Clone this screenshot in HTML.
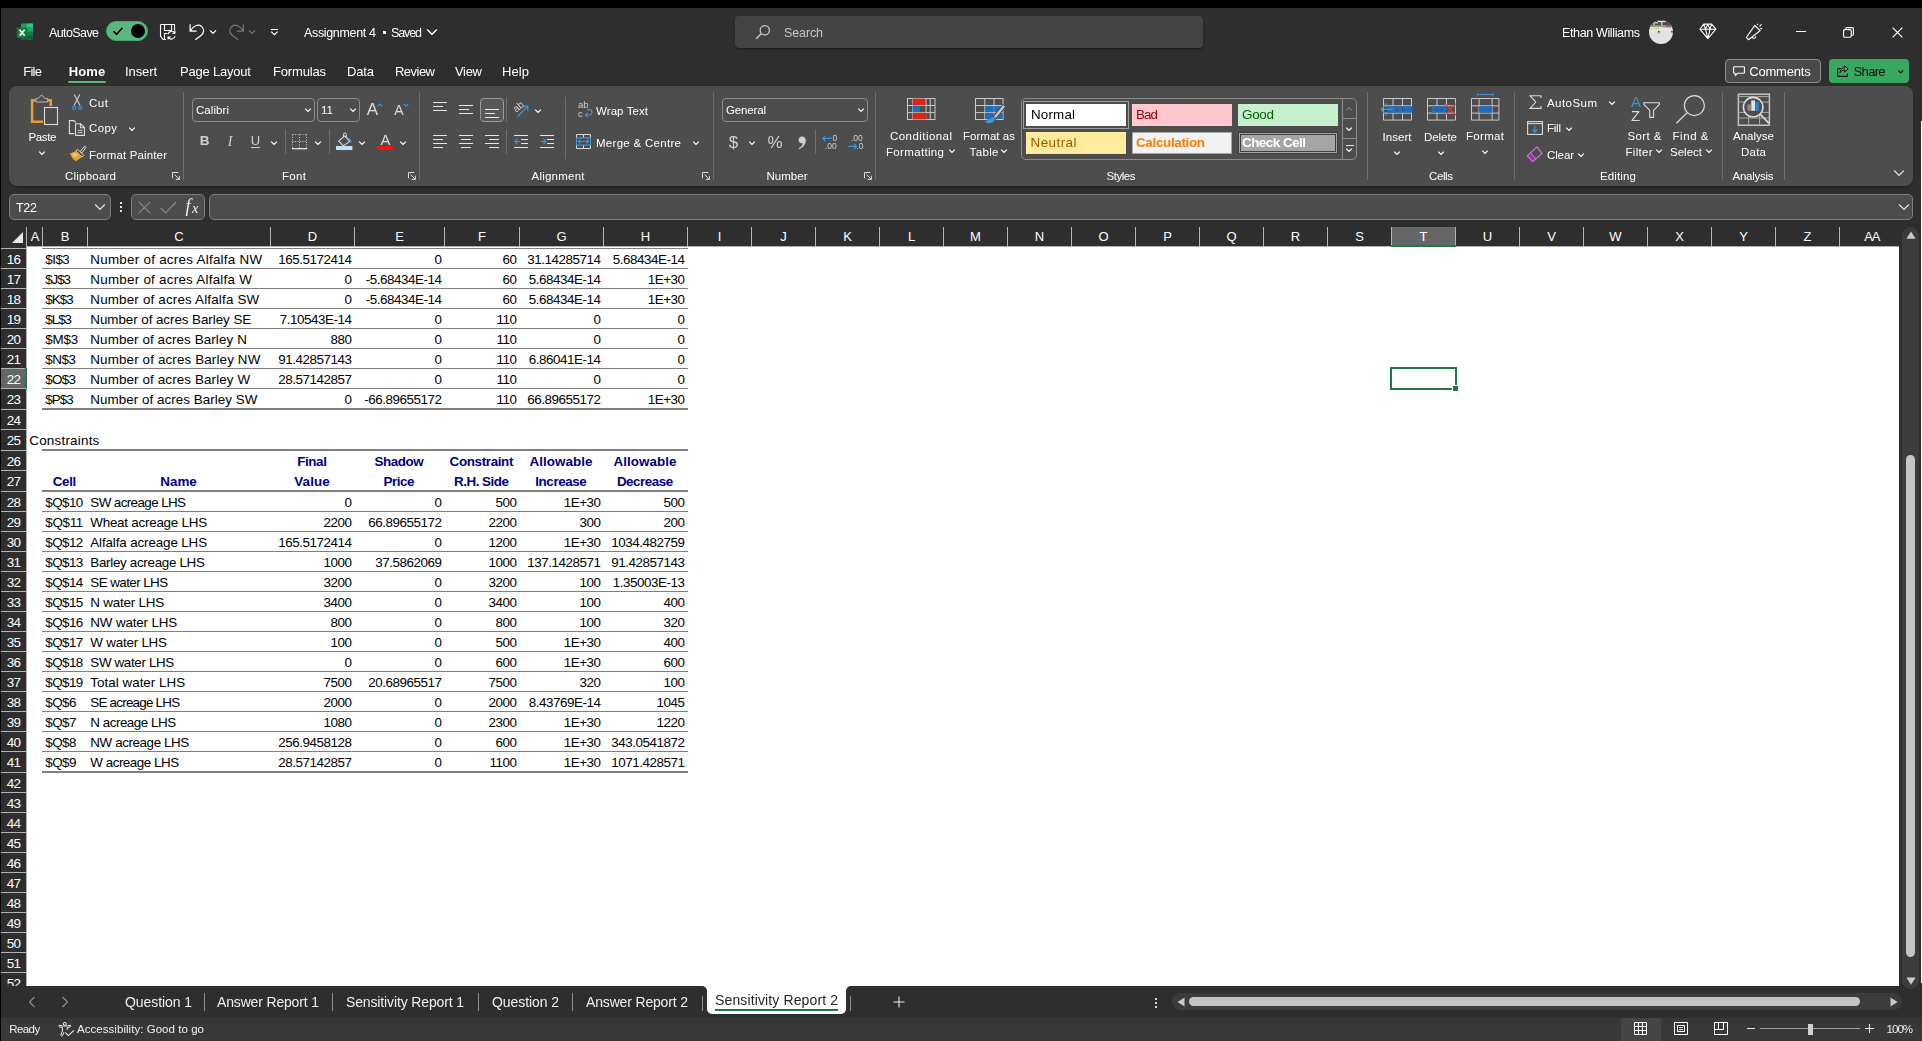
<!DOCTYPE html>
<html><head><meta charset="utf-8"><title>Excel</title>
<style>
html,body{margin:0;padding:0;}
body{width:1922px;height:1041px;overflow:hidden;background:#000;font-family:"Liberation Sans", sans-serif;position:relative;}
#r{position:absolute;left:0;top:0;width:1922px;height:1041px;overflow:hidden;background:#000;}
#r div,#r svg{position:absolute;box-sizing:border-box;}
#r svg{overflow:visible;}
.t{white-space:nowrap;font-kerning:normal;}
</style></head>
<body><div id="r">
<div style="left:1px;top:8px;width:1921px;height:1033px;background:#2e2e2e;"></div>
<svg style="left:16px;top:23px;" width="18" height="18" viewBox="0 0 18 18">
<rect x="5" y="0.6" width="12" height="16" rx="1.2" fill="#21a366"/>
<rect x="11" y="0.6" width="6" height="4" fill="#33c481"/>
<rect x="5" y="4.6" width="6" height="4" fill="#107c41"/>
<rect x="11" y="4.6" width="6" height="4" fill="#21a366"/>
<rect x="5" y="8.6" width="6" height="4" fill="#185c37"/>
<rect x="11" y="8.6" width="6" height="4" fill="#107c41"/>
<path d="M5 12.6 H17 V15.4 Q17 16.6 15.8 16.6 H6.2 Q5 16.6 5 15.4 Z" fill="#185c37"/>
<rect x="0.8" y="4.4" width="10.6" height="10.6" rx="1.2" fill="#107c41"/>
<path d="M3.6 6.8 L8.6 12.6 M8.6 6.8 L3.6 12.6" stroke="#fff" stroke-width="1.7" fill="none"/>
</svg>
<div style="left:106px;top:21px;width:42px;height:20px;background:#5ab87e;border-radius:10px;border:1.5px solid #4aa56d;"></div>
<div style="left:131px;top:24px;width:14px;height:14px;background:#000;border-radius:7px;"></div>
<svg style="left:112px;top:26px;" width="12" height="10" viewBox="0 0 12 10"><path d="M1.5 5.2 L4.6 8.3 L10.5 1.8" stroke="#000" stroke-width="1.6" fill="none"/></svg>
<svg style="left:159px;top:22px;" width="18" height="19" viewBox="0 0 18 19">
<path d="M1.5 2.5 H15.5 V8.4 M1.5 2.5 V14.2 L4 17.5 H7" stroke="#fff" stroke-width="1.1" fill="none" stroke-linejoin="round"/>
<path d="M5.5 2.5 V8.5 H12.5 V2.5" stroke="#fff" stroke-width="1.1" fill="none"/>
<path d="M5.5 17.5 V11.5 H8.4" stroke="#fff" stroke-width="1.1" fill="none"/>
<path d="M9.1 12.2 A3.6 3.6 0 0 1 15.7 11 M16 8.8 V11.4 H13.4" stroke="#fff" stroke-width="1.1" fill="none"/>
<path d="M16 14.2 A3.6 3.6 0 0 1 9.4 15.4 M9.1 17.6 V15 H11.7" stroke="#fff" stroke-width="1.1" fill="none"/>
</svg>
<svg style="left:189px;top:23px;" width="18" height="18" viewBox="0 0 18 18"><path d="M1.1 1.2 V8.1 H7.6 M1.5 7.7 C4 3 9 0.6 12.6 3.4 C16 6.2 14.8 10 12 12.6 L6.2 16.8" stroke="#fff" stroke-width="1.25" fill="none"/></svg>
<svg style="left:209.4px;top:28.6px;" width="8" height="6" viewBox="0 0 8 6"><path d="M1 1.4 L4 4.4 L7 1.4" stroke="#fff" stroke-width="1.25" fill="none"/></svg>
<svg style="left:226.6px;top:23px;" width="18" height="18" viewBox="0 0 18 18"><path d="M16.3 1.2 V8.1 H9.8 M15.9 7.7 C13.4 3 8.4 0.6 4.8 3.4 C1.4 6.2 2.6 10 5.4 12.6 L11.2 16.8" stroke="#757575" stroke-width="1.25" fill="none"/></svg>
<svg style="left:248.3px;top:28.6px;" width="8" height="6" viewBox="0 0 8 6"><path d="M1 1.4 L4 4.4 L7 1.4" stroke="#757575" stroke-width="1.25" fill="none"/></svg>
<svg style="left:270px;top:28px;" width="9" height="8" viewBox="0 0 9 8"><path d="M0.8 1.5 H8" stroke="#fff" stroke-width="1"/><path d="M1.2 3.6 L4.4 6.6 L7.6 3.6" stroke="#fff" stroke-width="1.2" fill="none"/></svg>
<div style="left:383px;top:31px;width:3px;height:3px;background:#fff;"></div>
<svg style="left:426px;top:28px;" width="12" height="8" viewBox="0 0 12 8"><path d="M1.2 1.5 L6 6.3 L10.8 1.5" stroke="#fff" stroke-width="1.3" fill="none"/></svg>
<div style="left:735px;top:16px;width:468px;height:32px;background:#444444;border-radius:4px;box-shadow:0 1px 2px rgba(0,0,0,0.45);"></div>
<svg style="left:755px;top:24px;" width="16" height="16" viewBox="0 0 16 16"><circle cx="9.8" cy="6.2" r="4.6" stroke="#c8c8c8" stroke-width="1.3" fill="none"/><path d="M6.4 9.6 L1.2 14.8" stroke="#c8c8c8" stroke-width="1.4"/></svg>
<svg style="left:1649px;top:20px;" width="24" height="24" viewBox="0 0 24 24">
<defs><clipPath id="av"><circle cx="12" cy="12" r="12"/></clipPath></defs>
<g clip-path="url(#av)">
<rect x="0" y="0" width="24" height="24" fill="#e2e2e2"/>
<rect x="0" y="0" width="24" height="5.6" fill="#4c4c4c"/>
<path d="M5 2.8 H9 M9 1.6 H16.5 M12.8 1.6 V5.6 M5 2.8 V5" stroke="#f4f4f4" stroke-width="1" fill="none"/>
<rect x="0" y="5.6" width="24" height="1.2" fill="#8a8a8a"/>
<rect x="17" y="5.4" width="7" height="1.1" fill="#c03030"/>
<rect x="14" y="7" width="10" height="1" fill="#e4c800"/>
<rect x="1.5" y="8.6" width="1.4" height="1" fill="#e4c800"/><rect x="5" y="7.8" width="3" height="0.9" fill="#e4c800"/><rect x="9" y="7.4" width="1" height="1.2" fill="#58c070"/>
<rect x="9" y="11" width="1.6" height="1.6" fill="#a02020"/><rect x="8" y="12.8" width="3.4" height="0.6" fill="#c9a0a0"/>
<rect x="22" y="11" width="2" height="1.6" fill="#2a6a9a"/>
</g></svg>
<svg style="left:1699px;top:23px;" width="18" height="17" viewBox="0 0 18 17"><path d="M4.8 1.1 H12.6 L16.9 6.2 L8.85 15.6 L0.9 6.2 Z M0.9 6.2 H16.9 M4.8 1.1 L6.5 6.2 L8.7 1.1 L11.1 6.2 L12.6 1.1 M6.5 6.2 L8.85 15.6 L11.1 6.2" stroke="#fff" stroke-width="1.05" fill="none" stroke-linejoin="round"/></svg>
<svg style="left:1745px;top:22px;" width="19" height="19" viewBox="0 0 19 19"><path d="M9.7 3.5 L15.2 8.6 L3.5 17.7 L1.3 15.5 Z" stroke="#fff" stroke-width="1.2" fill="none" stroke-linejoin="round"/><path d="M7.2 15 C7.8 17 10.6 16.8 10.9 14.2" stroke="#fff" stroke-width="1.1" fill="none"/><path d="M12.2 2.9 L13 1.9 M14.4 4.3 L16.6 2.4 M15.3 6.4 L17.1 6.7" stroke="#fff" stroke-width="1.1"/></svg>
<div style="left:1796px;top:31px;width:10px;height:1px;background:#fff;"></div>
<svg style="left:1843px;top:27px;" width="11" height="11" viewBox="0 0 11 11"><rect x="0.6" y="2.6" width="7.6" height="7.6" rx="1.2" stroke="#fff" stroke-width="1.1" fill="none"/><path d="M2.8 2.6 V1.6 Q2.8 0.6 3.8 0.6 H9.2 Q10.4 0.6 10.4 1.8 V7.2 Q10.4 8.2 9.4 8.2 H8.2" stroke="#fff" stroke-width="1.1" fill="none"/></svg>
<svg style="left:1892px;top:27px;" width="11" height="11" viewBox="0 0 11 11"><path d="M0.6 0.6 L10.4 10.4 M10.4 0.6 L0.6 10.4" stroke="#fff" stroke-width="1.2"/></svg>
<div style="left:68px;top:81px;width:38px;height:2px;background:#5ab87e;border-radius:1px;"></div>
<div style="left:1725px;top:59px;width:96px;height:24px;background:#4a4a4a;border:1px solid #8e8e8e;border-radius:4px;"></div>
<svg style="left:1733px;top:65.5px;" width="12" height="11" viewBox="0 0 12 11"><path d="M1.4 0.8 H10.6 Q11.4 0.8 11.4 1.6 V6.4 Q11.4 7.2 10.6 7.2 H4.6 L2.2 9.6 V7.2 H1.4 Q0.6 7.2 0.6 6.4 V1.6 Q0.6 0.8 1.4 0.8 Z" stroke="#fff" stroke-width="1.1" fill="none" stroke-linejoin="round"/></svg>
<div style="left:1829px;top:59px;width:80px;height:24px;background:#38a75f;border-radius:4px;"></div>
<svg style="left:1836.5px;top:65px;" width="12" height="12" viewBox="0 0 12 12"><path d="M4.2 3.6 H1.6 Q0.6 3.6 0.6 4.6 V10.4 Q0.6 11.4 1.6 11.4 H9.4 Q10.4 11.4 10.4 10.4 V8.4" stroke="#111" stroke-width="1.1" fill="none"/><path d="M7.6 0.8 L11.2 3.9 L7.6 7 V5.1 C5.4 5.1 4 6 3 7.8 C3.2 4.8 4.8 3 7.6 2.7 Z" stroke="#111" stroke-width="1" fill="none" stroke-linejoin="round"/></svg>
<svg style="left:1897px;top:68.5px;" width="8" height="6" viewBox="0 0 8 6"><path d="M1.2 1.4 L3.7 3.9 L6.2 1.4" stroke="#111" stroke-width="1.15" fill="none"/></svg>
<div style="left:9px;top:194px;width:102px;height:26px;background:#4d4d4d;border:1px solid #7d7d7d;border-radius:5px;"></div>
<svg style="left:94px;top:203px;" width="12" height="8" viewBox="0 0 12 8"><path d="M1.2 1.5 L6 6.3 L10.8 1.5" stroke="#e6e6e6" stroke-width="1.2" fill="none"/></svg>
<div style="left:120px;top:202px;width:2px;height:2px;background:#e0e0e0;"></div>
<div style="left:120px;top:206px;width:2px;height:2px;background:#e0e0e0;"></div>
<div style="left:120px;top:210px;width:2px;height:2px;background:#e0e0e0;"></div>
<div style="left:131px;top:194px;width:74px;height:26px;background:#4d4d4d;border:1px solid #7d7d7d;border-radius:5px;"></div>
<svg style="left:138px;top:201px;" width="13" height="13" viewBox="0 0 13 13"><path d="M0.8 0.8 L12.2 12.2 M12.2 0.8 L0.8 12.2" stroke="#8c8c8c" stroke-width="1.1"/></svg>
<svg style="left:160px;top:201px;" width="17" height="13" viewBox="0 0 17 13"><path d="M0.8 7 L5.6 11.8 L16.2 1" stroke="#8c8c8c" stroke-width="1.1" fill="none"/></svg>
<div style="left:209px;top:194px;width:1704px;height:26px;background:#4d4d4d;border:1px solid #7d7d7d;border-radius:5px;"></div>
<svg style="left:1897.5px;top:202.5px;" width="12" height="8" viewBox="0 0 12 8"><path d="M1.2 1.5 L6 6.3 L10.8 1.5" stroke="#e6e6e6" stroke-width="1.2" fill="none"/></svg>
<div style="left:9px;top:86px;width:1904px;height:100px;background:#4d4d4d;border-radius:8px;box-shadow:0 1px 2px rgba(0,0,0,0.35);"></div>
<svg style="left:29px;top:93px;" width="31" height="33" viewBox="0 0 31 33">
<path d="M7.2 7.2 H3.1 V28.8 H14" stroke="#e8a030" stroke-width="2.5" fill="none"/>
<path d="M18.4 7.2 H21.8 V13" stroke="#e8a030" stroke-width="2.5" fill="none"/>
<path d="M6.9 9 V5.4 H9.6 Q12.6 -0.6 15.6 5.4 H18.6 V9 Z" stroke="#b8b8b8" stroke-width="1" fill="#4d4d4d"/>
<rect x="15.5" y="14.5" width="13" height="17" stroke="#dcdcdc" stroke-width="1.1" fill="#4d4d4d"/>
</svg>
<svg style="left:37.5px;top:149.5px;" width="8" height="6" viewBox="0 0 8 6"><path d="M1.2 1.6 L4 4.4 L6.8 1.6" stroke="#fff" stroke-width="1.2" fill="none"/></svg>
<svg style="left:71px;top:94px;" width="12" height="17" viewBox="0 0 12 17">
<path d="M3.2 0.4 L9 11.4 M8.8 0.4 L3 11.4" stroke="#cfcfcf" stroke-width="1.1" fill="none"/>
<circle cx="3" cy="13.8" r="1.6" stroke="#3a96dd" stroke-width="1.1" fill="none"/>
<circle cx="9.2" cy="13.8" r="1.6" stroke="#3a96dd" stroke-width="1.1" fill="none"/>
</svg>
<svg style="left:68px;top:119px;" width="18" height="18" viewBox="0 0 18 18">
<path d="M6.4 14.6 H1.4 V1.6 H6 L7.8 3.4" stroke="#dcdcdc" stroke-width="1.1" fill="none"/>
<path d="M7.6 4.8 H12.6 L16.4 8.6 V16.4 H7.6 Z M12.4 5 V8.8 H16.2" stroke="#dcdcdc" stroke-width="1.1" fill="none"/>
<path d="M9.8 11.4 H14.4 M9.8 13.6 H14.4" stroke="#dcdcdc" stroke-width="0.9"/>
</svg>
<svg style="left:128px;top:125.5px;" width="8" height="6" viewBox="0 0 8 6"><path d="M1.2 1.6 L4 4.4 L6.8 1.6" stroke="#fff" stroke-width="1.2" fill="none"/></svg>
<svg style="left:68px;top:145px;" width="19" height="18" viewBox="0 0 19 18">
<path d="M16.4 1.4 L12.2 6.6 L13.8 8 L17.8 2.8 Q18 1 16.4 1.4 Z" stroke="#dcdcdc" stroke-width="1" fill="none" stroke-linejoin="round"/>
<path d="M9.6 4.2 L15.8 10.4 L14 12.2 L7.8 6 Z" stroke="#dcdcdc" stroke-width="1" fill="none" stroke-linejoin="round"/>
<path d="M7.4 6.2 L1.4 8.8 C3.6 10 3.4 12.6 5.4 14.6 L8.2 16.2 L14 11.8 Z" fill="#e8a030"/>
<path d="M7.6 7.6 L4 9.2 C5 10.4 5.6 11.6 6 12.6 L10.6 10.4 Z" fill="#f3c46c"/>
</svg>
<svg style="left:172.2px;top:172px;" width="9" height="9" viewBox="0 0 9 9"><path d="M0.5 6.3 V0.5 H6.3 M2.6 2.6 L7.4 7.4 M7.4 3.8 V7.4 H3.8" stroke="#dcdcdc" stroke-width="1" fill="none"/></svg>
<div style="left:183px;top:92px;width:1px;height:88px;background:#6f6f6f;"></div>
<div style="left:192px;top:98px;width:123px;height:24px;background:#4d4d4d;border:1px solid #8a8a8a;border-radius:4px;"></div>
<svg style="left:304px;top:107px;" width="8" height="6" viewBox="0 0 8 6"><path d="M1.2 1.6 L4 4.4 L6.8 1.6" stroke="#fff" stroke-width="1.2" fill="none"/></svg>
<div style="left:317px;top:98px;width:43px;height:24px;background:#4d4d4d;border:1px solid #8a8a8a;border-radius:4px;"></div>
<svg style="left:349px;top:107px;" width="8" height="6" viewBox="0 0 8 6"><path d="M1.2 1.6 L4 4.4 L6.8 1.6" stroke="#fff" stroke-width="1.2" fill="none"/></svg>
<svg style="left:377px;top:102.5px;" width="6" height="4" viewBox="0 0 6 4"><path d="M0.6 3.4 L3 1 L5.4 3.4" stroke="#3a96dd" stroke-width="1.1" fill="none"/></svg>
<svg style="left:402.5px;top:102.5px;" width="6" height="4" viewBox="0 0 6 4"><path d="M0.6 0.8 L3 3.2 L5.4 0.8" stroke="#3a96dd" stroke-width="1.1" fill="none"/></svg>
<div style="left:251px;top:147px;width:9px;height:1px;background:#d0d0d0;"></div>
<svg style="left:270px;top:139.5px;" width="8" height="6" viewBox="0 0 8 6"><path d="M1.2 1.6 L4 4.4 L6.8 1.6" stroke="#fff" stroke-width="1.2" fill="none"/></svg>
<div style="left:285px;top:130px;width:1px;height:24px;background:#6f6f6f;"></div>
<svg style="left:292px;top:134px;" width="16" height="16" viewBox="0 0 16 16">
<path d="M0.5 0.5 H15 M0.5 0.5 V14 M14.5 0.5 V14 M7.5 0.5 V14 M0.5 7.5 H15" stroke="#c4c4c4" stroke-width="1" stroke-dasharray="1 1.5" fill="none"/>
<path d="M0 14.7 H15.2" stroke="#f0f0f0" stroke-width="1.2"/></svg>
<svg style="left:314px;top:139.5px;" width="8" height="6" viewBox="0 0 8 6"><path d="M1.2 1.6 L4 4.4 L6.8 1.6" stroke="#fff" stroke-width="1.2" fill="none"/></svg>
<div style="left:329px;top:130px;width:1px;height:24px;background:#6f6f6f;"></div>
<svg style="left:336px;top:132px;" width="17" height="19" viewBox="0 0 17 19">
<path d="M2.75 9.2 L8.6 3.9 L13.75 9.4 L8.2 13.4 Q7.4 13.9 6.6 13.2 Z" stroke="#dcdcdc" stroke-width="1.1" fill="none" stroke-linejoin="round"/>
<path d="M7.5 5.2 V2.4 Q7.5 1 8.9 1 Q10.3 1 10.3 2.4 V5.6" stroke="#dcdcdc" stroke-width="1" fill="none"/>
<path d="M12.4 6 Q15.4 8 14.6 10.8" stroke="#3a96dd" stroke-width="1.3" fill="none"/>
<rect x="0" y="14" width="16.4" height="4" fill="#c7e0f4"/></svg>
<svg style="left:358px;top:139.5px;" width="8" height="6" viewBox="0 0 8 6"><path d="M1.2 1.6 L4 4.4 L6.8 1.6" stroke="#fff" stroke-width="1.2" fill="none"/></svg>
<div style="left:377px;top:146px;width:16px;height:4px;background:#f01414;"></div>
<svg style="left:399px;top:139.5px;" width="8" height="6" viewBox="0 0 8 6"><path d="M1.2 1.6 L4 4.4 L6.8 1.6" stroke="#fff" stroke-width="1.2" fill="none"/></svg>
<svg style="left:408px;top:172px;" width="9" height="9" viewBox="0 0 9 9"><path d="M0.5 6.3 V0.5 H6.3 M2.6 2.6 L7.4 7.4 M7.4 3.8 V7.4 H3.8" stroke="#dcdcdc" stroke-width="1" fill="none"/></svg>
<div style="left:419px;top:92px;width:1px;height:88px;background:#6f6f6f;"></div>
<svg style="left:433px;top:102px;" width="14" height="12" viewBox="0 0 14 12"><rect x="0" y="0" width="14" height="1" fill="#e6e6e6"/><rect x="0" y="4" width="10" height="1" fill="#e6e6e6"/><rect x="0" y="8" width="14" height="1" fill="#e6e6e6"/></svg>
<svg style="left:459px;top:105px;" width="14" height="12" viewBox="0 0 14 12"><rect x="0" y="0" width="14" height="1" fill="#e6e6e6"/><rect x="0" y="4" width="10" height="1" fill="#e6e6e6"/><rect x="0" y="8" width="14" height="1" fill="#e6e6e6"/></svg>
<div style="left:480px;top:98px;width:24px;height:24px;background:#585858;border:1px solid #9a9a9a;border-radius:4px;"></div>
<svg style="left:485px;top:109px;" width="14" height="12" viewBox="0 0 14 12"><rect x="0" y="0" width="14" height="1" fill="#e6e6e6"/><rect x="0" y="4" width="10" height="1" fill="#e6e6e6"/><rect x="0" y="8" width="14" height="1" fill="#e6e6e6"/></svg>
<div style="left:506px;top:98px;width:1px;height:24px;background:#6f6f6f;"></div>
<svg style="left:516px;top:103.5px;" width="14" height="14" viewBox="0 0 14 14"><path d="M1.5 12.5 L11.5 2.5 M6.8 2.2 H11.8 V7.2" stroke="#3a96dd" stroke-width="1.2" fill="none"/></svg>
<svg style="left:533.5px;top:107.5px;" width="8" height="6" viewBox="0 0 8 6"><path d="M1.2 1.6 L4 4.4 L6.8 1.6" stroke="#fff" stroke-width="1.2" fill="none"/></svg>
<svg style="left:433px;top:135px;" width="14" height="16" viewBox="0 0 14 16"><rect x="0" y="0" width="14" height="1" fill="#e6e6e6"/><rect x="0" y="4" width="10" height="1" fill="#e6e6e6"/><rect x="0" y="8" width="14" height="1" fill="#e6e6e6"/><rect x="0" y="12" width="10" height="1" fill="#e6e6e6"/></svg>
<svg style="left:459px;top:135px;" width="14" height="16" viewBox="0 0 14 16"><rect x="0" y="0" width="14" height="1" fill="#e6e6e6"/><rect x="2" y="4" width="10" height="1" fill="#e6e6e6"/><rect x="0" y="8" width="14" height="1" fill="#e6e6e6"/><rect x="2" y="12" width="10" height="1" fill="#e6e6e6"/></svg>
<svg style="left:485px;top:135px;" width="14" height="16" viewBox="0 0 14 16"><rect x="0" y="0" width="14" height="1" fill="#e6e6e6"/><rect x="4" y="4" width="10" height="1" fill="#e6e6e6"/><rect x="0" y="8" width="14" height="1" fill="#e6e6e6"/><rect x="4" y="12" width="10" height="1" fill="#e6e6e6"/></svg>
<div style="left:506px;top:130px;width:1px;height:24px;background:#6f6f6f;"></div>
<svg style="left:514px;top:135px;" width="14" height="13" viewBox="0 0 14 13"><path d="M0 0.5 H14 M7 4.5 H14 M7 8.5 H14 M0 12.5 H14" stroke="#e6e6e6" stroke-width="1"/><path d="M6 6.5 H0.8 M3.2 4 L0.8 6.5 L3.2 9" stroke="#3a96dd" stroke-width="1.1" fill="none"/></svg>
<svg style="left:540px;top:135px;" width="14" height="13" viewBox="0 0 14 13"><path d="M0 0.5 H14 M7 4.5 H14 M7 8.5 H14 M0 12.5 H14" stroke="#e6e6e6" stroke-width="1"/><path d="M0.6 6.5 H5.8 M3.4 4 L5.8 6.5 L3.4 9" stroke="#3a96dd" stroke-width="1.1" fill="none"/></svg>
<div style="left:565px;top:97px;width:1px;height:62px;background:#6f6f6f;"></div>
<svg style="left:583px;top:108px;" width="10" height="10" viewBox="0 0 10 10"><path d="M4 1.6 H6.4 Q9 1.6 9 4.4 Q9 7 6.4 7 H2.5 M4.6 4.8 L2.4 7 L4.6 9.2" stroke="#3a96dd" stroke-width="1.1" fill="none"/></svg>
<svg style="left:576px;top:134px;" width="15" height="15" viewBox="0 0 15 15">
<path d="M0.5 0.5 H14.5 V14.5 H0.5 Z M7.5 0.5 V4 M7.5 11 V14.5" stroke="#dcdcdc" stroke-width="1" fill="none"/>
<path d="M0.5 3.9 H14.5 V11.1 H0.5 Z" stroke="#3a96dd" stroke-width="1.1" fill="none"/>
<path d="M2.4 7.5 H12.6 M4.4 5.5 L2.4 7.5 L4.4 9.5 M10.6 5.5 L12.6 7.5 L10.6 9.5" stroke="#3a96dd" stroke-width="1.1" fill="none"/></svg>
<svg style="left:692px;top:139.5px;" width="8" height="6" viewBox="0 0 8 6"><path d="M1.2 1.6 L4 4.4 L6.8 1.6" stroke="#fff" stroke-width="1.2" fill="none"/></svg>
<svg style="left:702px;top:172px;" width="9" height="9" viewBox="0 0 9 9"><path d="M0.5 6.3 V0.5 H6.3 M2.6 2.6 L7.4 7.4 M7.4 3.8 V7.4 H3.8" stroke="#dcdcdc" stroke-width="1" fill="none"/></svg>
<div style="left:713px;top:92px;width:1px;height:88px;background:#6f6f6f;"></div>
<div style="left:722px;top:98px;width:146px;height:24px;background:#4d4d4d;border:1px solid #8a8a8a;border-radius:4px;"></div>
<svg style="left:857px;top:107px;" width="8" height="6" viewBox="0 0 8 6"><path d="M1.2 1.6 L4 4.4 L6.8 1.6" stroke="#fff" stroke-width="1.2" fill="none"/></svg>
<svg style="left:748px;top:139.5px;" width="8" height="6" viewBox="0 0 8 6"><path d="M1.2 1.6 L4 4.4 L6.8 1.6" stroke="#fff" stroke-width="1.2" fill="none"/></svg>
<svg style="left:796.5px;top:135.7px;" width="10" height="14" viewBox="0 0 10 14"><path d="M5 0.5 C7.5 0.5 8.8 2.4 8.8 4.6 C8.8 8.4 6 11.6 2.2 13.2 L1.6 12.2 C4.2 10.8 5.6 9 5.8 7.2 C3.6 7.6 1.6 6.2 1.6 3.9 C1.6 1.9 3.1 0.5 5 0.5 Z" fill="#d0d0d0"/></svg>
<div style="left:815px;top:130px;width:1px;height:24px;background:#6f6f6f;"></div>
<svg style="left:822px;top:135px;" width="11" height="7" viewBox="0 0 11 7"><path d="M0.8 3.4 H9.8 M3.4 0.8 L0.8 3.4 L3.4 6" stroke="#3a96dd" stroke-width="1.1" fill="none"/></svg>
<svg style="left:848px;top:142.5px;" width="10" height="7" viewBox="0 0 10 7"><path d="M0.4 3.4 H8.6 M6 0.8 L8.6 3.4 L6 6" stroke="#3a96dd" stroke-width="1.1" fill="none"/></svg>
<svg style="left:864px;top:172px;" width="9" height="9" viewBox="0 0 9 9"><path d="M0.5 6.3 V0.5 H6.3 M2.6 2.6 L7.4 7.4 M7.4 3.8 V7.4 H3.8" stroke="#dcdcdc" stroke-width="1" fill="none"/></svg>
<div style="left:875px;top:92px;width:1px;height:88px;background:#6f6f6f;"></div>
<svg style="left:907px;top:98px;" width="28" height="22" viewBox="0 0 28 22">
<rect x="0.5" y="0.5" width="27.5" height="21" fill="none" stroke="#c8c8c8" stroke-width="1"/>
<path d="M0.5 7.5 H28 M0.5 14.6 H28 M5.6 0.5 V21.5 M19 0.5 V21.5 M23.2 0.5 V21.5" stroke="#c8c8c8" stroke-width="1"/>
<rect x="5.6" y="0.6" width="12.6" height="6.6" fill="#d9261c"/>
<rect x="5.6" y="7.7" width="7.4" height="6.2" fill="#1a6fc4"/>
<rect x="5.6" y="14.8" width="14" height="6.6" fill="#d9261c"/></svg>
<svg style="left:947.5px;top:148.3px;" width="8" height="6" viewBox="0 0 8 6"><path d="M1.2 1.6 L4 4.4 L6.8 1.6" stroke="#fff" stroke-width="1.2" fill="none"/></svg>
<svg style="left:975px;top:98px;" width="30" height="28" viewBox="0 0 30 28">
<rect x="0.5" y="0.5" width="27.5" height="21" fill="none" stroke="#c8c8c8" stroke-width="1"/>
<path d="M0.5 7.5 H28 M0.5 14.6 H28 M9.8 0.5 V21.5 M19 0.5 V21.5" stroke="#c8c8c8" stroke-width="1"/>
<rect x="10.3" y="8" width="8.2" height="6.1" fill="#1a6fc4"/><rect x="19.5" y="8" width="8" height="6.1" fill="#1a6fc4"/>
<rect x="10.3" y="15.1" width="8.2" height="5.9" fill="#1a6fc4"/><rect x="19.5" y="15.1" width="8" height="5.9" fill="#1a6fc4"/>
<path d="M28.6 8.6 L19.4 20" stroke="#4d4d4d" stroke-width="4.4" stroke-linecap="round"/>
<path d="M28.6 8.6 L19.4 20" stroke="#c4c4c4" stroke-width="2.4" stroke-linecap="round"/>
<path d="M19.8 19 C16.4 18.4 14.4 21 9.4 23.6 C12.6 26.8 19.4 26 20.6 20 Z" fill="#3a96dd" stroke="#4d4d4d" stroke-width="0.6"/></svg>
<svg style="left:999.5px;top:148.3px;" width="8" height="6" viewBox="0 0 8 6"><path d="M1.2 1.6 L4 4.4 L6.8 1.6" stroke="#fff" stroke-width="1.2" fill="none"/></svg>
<div style="left:1021px;top:98px;width:336px;height:62px;border:1px solid #8a8a8a;border-radius:5px;"></div>
<div style="left:1342px;top:99px;width:1px;height:60px;background:#8a8a8a;"></div>
<div style="left:1343px;top:118px;width:13px;height:1px;background:#8a8a8a;"></div>
<div style="left:1343px;top:138px;width:13px;height:1px;background:#8a8a8a;"></div>
<svg style="left:1345.3px;top:105.5px;" width="8" height="6" viewBox="0 0 8 6"><path d="M1.2 4.4 L4 1.6 L6.8 4.4" stroke="#7a7a7a" stroke-width="1.2" fill="none"/></svg>
<svg style="left:1345.3px;top:125.5px;" width="8" height="6" viewBox="0 0 8 6"><path d="M1.2 1.6 L4 4.4 L6.8 1.6" stroke="#fff" stroke-width="1.2" fill="none"/></svg>
<div style="left:1345.5px;top:145px;width:8px;height:1px;background:#e6e6e6;"></div>
<svg style="left:1345.3px;top:146.5px;" width="8" height="6" viewBox="0 0 8 6"><path d="M1.2 1.6 L4 4.4 L6.8 1.6" stroke="#fff" stroke-width="1.2" fill="none"/></svg>
<div style="left:1023px;top:101px;width:106px;height:28px;border:1px solid #a0a0a0;"></div>
<div style="left:1026px;top:104px;width:100px;height:22px;background:#ffffff;"></div>
<div style="left:1132px;top:104px;width:100px;height:22px;background:#ffc7ce;"></div>
<div style="left:1238px;top:104px;width:100px;height:22px;background:#c6efce;"></div>
<div style="left:1026px;top:132px;width:100px;height:22px;background:#ffeb9c;"></div>
<div style="left:1132px;top:132px;width:100px;height:22px;background:#f2f2f2;border:1px solid #a6a6a6;"></div>
<div style="left:1238px;top:132px;width:100px;height:22px;background:#a5a5a5;border:3px double #3f3f3f;"></div>
<div style="left:1367px;top:92px;width:1px;height:88px;background:#6f6f6f;"></div>
<svg style="left:1380px;top:96px;" width="34" height="26" viewBox="0 0 34 26"><path d="M3.5 2.5 H31.5 M3.5 9.8 H31.5 M3.5 17.1 H31.5 M3.5 24.1 H31.5 M3.5 2.5 V24.1 M13.0 2.5 V9.8 M13.0 17.1 V24.1 M22.5 2.5 V9.8 M22.5 17.1 V24.1 M31.5 2.5 V24.1 " stroke="#c8c8c8" stroke-width="1" fill="none"/><rect x="8" y="10.3" width="8.6" height="6.3" fill="#1a6fc4"/><rect x="17.6" y="10.3" width="4.6" height="6.3" fill="#1a6fc4"/><rect x="23.2" y="10.3" width="9.4" height="6.3" fill="#1a6fc4"/><path d="M1.2 13.4 H13 M6.6 7.4 L1.2 13.4 L6.6 19.4" stroke="#3a96dd" stroke-width="1.3" fill="none"/></svg>
<svg style="left:1424px;top:96px;" width="34" height="26" viewBox="0 0 34 26"><path d="M3.5 2.5 H31.5 M3.5 9.8 H31.5 M3.5 17.1 H31.5 M3.5 24.1 H31.5 M3.5 2.5 V24.1 M13.0 2.5 V9.8 M13.0 17.1 V24.1 M22.5 2.5 V9.8 M22.5 17.1 V24.1 M31.5 2.5 V24.1 " stroke="#c8c8c8" stroke-width="1" fill="none"/><rect x="7.6" y="10.3" width="4.8" height="6.3" fill="#1a6fc4"/><rect x="13.4" y="10.3" width="3.6" height="6.3" fill="#1a6fc4"/><path d="M18 10.3 H20.4 L24 13.4 L20.4 16.6 H18 Z" fill="#1a6fc4"/><path d="M20.6 7.6 L32 19.2 M32 7.6 L20.6 19.2" stroke="#e0393e" stroke-width="1.3" fill="none"/></svg>
<svg style="left:1468px;top:92px;" width="34" height="30" viewBox="0 0 34 30"><path d="M9.6 2.6 H24.8 M9.6 1 V4.2 M24.8 1 V4.2" stroke="#3a96dd" stroke-width="1" fill="none"/><path d="M3.5 6.5 H30.9 M3.5 13.8 H30.9 M3.5 21.1 H30.9 M3.5 28.1 H30.9 M3.5 6.5 V28.1 M11.1 6.5 V28.1 M24.1 6.5 V28.1 M30.9 6.5 V28.1 " stroke="#c8c8c8" stroke-width="1" fill="none"/><rect x="11.1" y="14.3" width="13" height="6.3" fill="#1a6fc4"/></svg>
<svg style="left:1393px;top:149.5px;" width="8" height="6" viewBox="0 0 8 6"><path d="M1.2 1.6 L4 4.4 L6.8 1.6" stroke="#fff" stroke-width="1.2" fill="none"/></svg>
<svg style="left:1436.5px;top:149.5px;" width="8" height="6" viewBox="0 0 8 6"><path d="M1.2 1.6 L4 4.4 L6.8 1.6" stroke="#fff" stroke-width="1.2" fill="none"/></svg>
<svg style="left:1481px;top:148.5px;" width="8" height="6" viewBox="0 0 8 6"><path d="M1.2 1.6 L4 4.4 L6.8 1.6" stroke="#fff" stroke-width="1.2" fill="none"/></svg>
<div style="left:1514px;top:92px;width:1px;height:88px;background:#6f6f6f;"></div>
<svg style="left:1528.5px;top:95px;" width="13" height="15" viewBox="0 0 13 15"><path d="M12 3 V0.7 H1 L6.8 7 L1 13.4 H12 V11" stroke="#dcdcdc" stroke-width="1.1" fill="none"/></svg>
<svg style="left:1608px;top:99.7px;" width="8" height="6" viewBox="0 0 8 6"><path d="M1.2 1.6 L4 4.4 L6.8 1.6" stroke="#fff" stroke-width="1.2" fill="none"/></svg>
<svg style="left:1527px;top:121px;" width="16" height="14" viewBox="0 0 16 14"><rect x="0.6" y="0.6" width="14.8" height="12.8" stroke="#dcdcdc" stroke-width="1.1" fill="none"/><path d="M0.6 2.6 H15.4" stroke="#dcdcdc" stroke-width="1"/><path d="M7.8 4.8 V11 M5.2 8.6 L7.8 11.2 L10.4 8.6" stroke="#3a96dd" stroke-width="1.2" fill="none"/></svg>
<svg style="left:1564.5px;top:125.5px;" width="8" height="6" viewBox="0 0 8 6"><path d="M1.2 1.6 L4 4.4 L6.8 1.6" stroke="#fff" stroke-width="1.2" fill="none"/></svg>
<svg style="left:1526px;top:146px;" width="17" height="17" viewBox="0 0 17 17"><path d="M11 0.8 L16 7.6 L6.6 15.6 L1.4 9.7 Z" stroke="#cf78d8" stroke-width="1.1" fill="none" stroke-linejoin="round"/><path d="M1.4 9.7 L4.6 6.8 L9.8 12.9 L6.6 15.6 Z" fill="#9b2fae" stroke="#cf78d8" stroke-width="1" stroke-linejoin="round"/></svg>
<svg style="left:1576.5px;top:151.7px;" width="8" height="6" viewBox="0 0 8 6"><path d="M1.2 1.6 L4 4.4 L6.8 1.6" stroke="#fff" stroke-width="1.2" fill="none"/></svg>
<svg style="left:1643px;top:101.5px;" width="18" height="18" viewBox="0 0 18 18"><path d="M0.8 0.8 H16.4 V2.4 L10.6 8.4 V15.4 H6.8 V8.4 L0.8 2.4 Z" stroke="#dcdcdc" stroke-width="1.1" fill="none" stroke-linejoin="round"/></svg>
<svg style="left:1654.5px;top:148.3px;" width="8" height="6" viewBox="0 0 8 6"><path d="M1.2 1.6 L4 4.4 L6.8 1.6" stroke="#fff" stroke-width="1.2" fill="none"/></svg>
<svg style="left:1674px;top:94px;" width="32" height="30" viewBox="0 0 32 30"><circle cx="20.4" cy="11.6" r="10" stroke="#dcdcdc" stroke-width="1.2" fill="none"/><path d="M13.2 18.6 L2.4 29.2" stroke="#dcdcdc" stroke-width="1.3"/></svg>
<svg style="left:1704.5px;top:148.3px;" width="8" height="6" viewBox="0 0 8 6"><path d="M1.2 1.6 L4 4.4 L6.8 1.6" stroke="#fff" stroke-width="1.2" fill="none"/></svg>
<div style="left:1722px;top:92px;width:1px;height:88px;background:#6f6f6f;"></div>
<svg style="left:1737px;top:92.5px;" width="34" height="34" viewBox="0 0 34 34">
<rect x="1.4" y="1.2" width="31" height="31" stroke="#c4c4c4" stroke-width="1.5" fill="none"/>
<path d="M1.4 3.6 H32.4 M1.4 9 H32.4 M1.4 19.4 H32.4 M1.4 25 H32.4 M11.6 19.4 V32 M22.6 19.4 V32" stroke="#a9a9a9" stroke-width="1"/>
<circle cx="16.2" cy="14.2" r="9.8" stroke="#dcdcdc" stroke-width="1.6" fill="#4d4d4d"/>
<rect x="10.4" y="11.4" width="3.4" height="6.4" fill="#8a8a8a"/><rect x="14.2" y="7.4" width="3.8" height="10.4" fill="#e0e0e0"/><rect x="18.4" y="9.4" width="3.4" height="8.4" fill="#2b88d8"/>
<path d="M23.4 21.4 L32 30.4" stroke="#dcdcdc" stroke-width="1.6"/></svg>
<div style="left:1784px;top:92px;width:1px;height:88px;background:#6f6f6f;"></div>
<svg style="left:1892.5px;top:168.5px;" width="12" height="8" viewBox="0 0 12 8"><path d="M1.2 1.5 L6 6.3 L10.8 1.5" stroke="#e6e6e6" stroke-width="1.2" fill="none"/></svg>
<div style="left:27px;top:247px;width:1872px;height:739px;background:#ffffff;"></div>
<div style="left:1391px;top:227px;width:64px;height:20px;background:#666666;"></div>
<div class="t" style="top:227px;font-size:13px;line-height:20px;color:#ffffff;left:-465px;width:1000px;text-align:center;">A</div>
<div style="left:42px;top:227px;width:1px;height:20px;background:#b4b4b4;"></div>
<div class="t" style="top:227px;font-size:13px;line-height:20px;color:#ffffff;left:-435px;width:1000px;text-align:center;">B</div>
<div style="left:87px;top:227px;width:1px;height:20px;background:#b4b4b4;"></div>
<div class="t" style="top:227px;font-size:13px;line-height:20px;color:#ffffff;left:-321px;width:1000px;text-align:center;">C</div>
<div style="left:270px;top:227px;width:1px;height:20px;background:#b4b4b4;"></div>
<div class="t" style="top:227px;font-size:13px;line-height:20px;color:#ffffff;left:-187.5px;width:1000px;text-align:center;">D</div>
<div style="left:354px;top:227px;width:1px;height:20px;background:#b4b4b4;"></div>
<div class="t" style="top:227px;font-size:13px;line-height:20px;color:#ffffff;left:-100.5px;width:1000px;text-align:center;">E</div>
<div style="left:444px;top:227px;width:1px;height:20px;background:#b4b4b4;"></div>
<div class="t" style="top:227px;font-size:13px;line-height:20px;color:#ffffff;left:-18px;width:1000px;text-align:center;">F</div>
<div style="left:519px;top:227px;width:1px;height:20px;background:#b4b4b4;"></div>
<div class="t" style="top:227px;font-size:13px;line-height:20px;color:#ffffff;left:61.5px;width:1000px;text-align:center;">G</div>
<div style="left:603px;top:227px;width:1px;height:20px;background:#b4b4b4;"></div>
<div class="t" style="top:227px;font-size:13px;line-height:20px;color:#ffffff;left:145.5px;width:1000px;text-align:center;">H</div>
<div style="left:687px;top:227px;width:1px;height:20px;background:#b4b4b4;"></div>
<div class="t" style="top:227px;font-size:13px;line-height:20px;color:#ffffff;left:219.5px;width:1000px;text-align:center;">I</div>
<div style="left:751px;top:227px;width:1px;height:20px;background:#b4b4b4;"></div>
<div class="t" style="top:227px;font-size:13px;line-height:20px;color:#ffffff;left:283.5px;width:1000px;text-align:center;">J</div>
<div style="left:815px;top:227px;width:1px;height:20px;background:#b4b4b4;"></div>
<div class="t" style="top:227px;font-size:13px;line-height:20px;color:#ffffff;left:347.5px;width:1000px;text-align:center;">K</div>
<div style="left:879px;top:227px;width:1px;height:20px;background:#b4b4b4;"></div>
<div class="t" style="top:227px;font-size:13px;line-height:20px;color:#ffffff;left:411.5px;width:1000px;text-align:center;">L</div>
<div style="left:943px;top:227px;width:1px;height:20px;background:#b4b4b4;"></div>
<div class="t" style="top:227px;font-size:13px;line-height:20px;color:#ffffff;left:475.5px;width:1000px;text-align:center;">M</div>
<div style="left:1007px;top:227px;width:1px;height:20px;background:#b4b4b4;"></div>
<div class="t" style="top:227px;font-size:13px;line-height:20px;color:#ffffff;left:539.5px;width:1000px;text-align:center;">N</div>
<div style="left:1071px;top:227px;width:1px;height:20px;background:#b4b4b4;"></div>
<div class="t" style="top:227px;font-size:13px;line-height:20px;color:#ffffff;left:603.5px;width:1000px;text-align:center;">O</div>
<div style="left:1135px;top:227px;width:1px;height:20px;background:#b4b4b4;"></div>
<div class="t" style="top:227px;font-size:13px;line-height:20px;color:#ffffff;left:667.5px;width:1000px;text-align:center;">P</div>
<div style="left:1199px;top:227px;width:1px;height:20px;background:#b4b4b4;"></div>
<div class="t" style="top:227px;font-size:13px;line-height:20px;color:#ffffff;left:731.5px;width:1000px;text-align:center;">Q</div>
<div style="left:1263px;top:227px;width:1px;height:20px;background:#b4b4b4;"></div>
<div class="t" style="top:227px;font-size:13px;line-height:20px;color:#ffffff;left:795.5px;width:1000px;text-align:center;">R</div>
<div style="left:1327px;top:227px;width:1px;height:20px;background:#b4b4b4;"></div>
<div class="t" style="top:227px;font-size:13px;line-height:20px;color:#ffffff;left:859.5px;width:1000px;text-align:center;">S</div>
<div style="left:1391px;top:227px;width:1px;height:20px;background:#b4b4b4;"></div>
<div class="t" style="top:227px;font-size:13px;line-height:20px;color:#ffffff;left:923.5px;width:1000px;text-align:center;">T</div>
<div style="left:1455px;top:227px;width:1px;height:20px;background:#b4b4b4;"></div>
<div class="t" style="top:227px;font-size:13px;line-height:20px;color:#ffffff;left:987.5px;width:1000px;text-align:center;">U</div>
<div style="left:1519px;top:227px;width:1px;height:20px;background:#b4b4b4;"></div>
<div class="t" style="top:227px;font-size:13px;line-height:20px;color:#ffffff;left:1051.5px;width:1000px;text-align:center;">V</div>
<div style="left:1583px;top:227px;width:1px;height:20px;background:#b4b4b4;"></div>
<div class="t" style="top:227px;font-size:13px;line-height:20px;color:#ffffff;left:1115.5px;width:1000px;text-align:center;">W</div>
<div style="left:1647px;top:227px;width:1px;height:20px;background:#b4b4b4;"></div>
<div class="t" style="top:227px;font-size:13px;line-height:20px;color:#ffffff;left:1179.5px;width:1000px;text-align:center;">X</div>
<div style="left:1711px;top:227px;width:1px;height:20px;background:#b4b4b4;"></div>
<div class="t" style="top:227px;font-size:13px;line-height:20px;color:#ffffff;left:1243.5px;width:1000px;text-align:center;">Y</div>
<div style="left:1775px;top:227px;width:1px;height:20px;background:#b4b4b4;"></div>
<div class="t" style="top:227px;font-size:13px;line-height:20px;color:#ffffff;left:1307.5px;width:1000px;text-align:center;">Z</div>
<div style="left:1839px;top:227px;width:1px;height:20px;background:#b4b4b4;"></div>
<div class="t" style="top:227px;font-size:13px;line-height:20px;color:#ffffff;letter-spacing:-1.2px;left:1372.3px;width:1000px;text-align:center;text-indent:-1.2px;">AA</div>
<div style="left:26px;top:227px;width:1px;height:759px;background:#b4b4b4;"></div>
<div style="left:27px;top:246px;width:1872px;height:1px;background:#b0b0b0;"></div>
<div style="left:1391px;top:245px;width:65px;height:2px;background:#1f7a45;"></div>
<svg style="left:11px;top:231px;" width="13" height="13" viewBox="0 0 13 13"><path d="M12 1 V12 H1 Z" fill="#e8e8e8"/></svg>
<div style="left:1px;top:248px;width:25px;height:1px;background:#b4b4b4;"></div>
<div style="left:1px;top:268px;width:25px;height:1px;background:#b4b4b4;"></div>
<div class="t" style="top:250px;font-size:13.5px;line-height:20px;color:#ffffff;letter-spacing:-0.9px;left:-486.15px;width:1000px;text-align:center;text-indent:-0.9px;">16</div>
<div style="left:1px;top:288px;width:25px;height:1px;background:#b4b4b4;"></div>
<div class="t" style="top:270px;font-size:13.5px;line-height:20px;color:#ffffff;letter-spacing:-0.9px;left:-486.15px;width:1000px;text-align:center;text-indent:-0.9px;">17</div>
<div style="left:1px;top:308px;width:25px;height:1px;background:#b4b4b4;"></div>
<div class="t" style="top:290px;font-size:13.5px;line-height:20px;color:#ffffff;letter-spacing:-0.9px;left:-486.15px;width:1000px;text-align:center;text-indent:-0.9px;">18</div>
<div style="left:1px;top:328px;width:25px;height:1px;background:#b4b4b4;"></div>
<div class="t" style="top:310px;font-size:13.5px;line-height:20px;color:#ffffff;letter-spacing:-0.9px;left:-486.15px;width:1000px;text-align:center;text-indent:-0.9px;">19</div>
<div style="left:1px;top:348px;width:25px;height:1px;background:#b4b4b4;"></div>
<div class="t" style="top:330px;font-size:13.5px;line-height:20px;color:#ffffff;letter-spacing:-0.9px;left:-486.15px;width:1000px;text-align:center;text-indent:-0.9px;">20</div>
<div style="left:1px;top:368px;width:25px;height:1px;background:#b4b4b4;"></div>
<div class="t" style="top:350px;font-size:13.5px;line-height:20px;color:#ffffff;letter-spacing:-0.9px;left:-486.15px;width:1000px;text-align:center;text-indent:-0.9px;">21</div>
<div style="left:1px;top:369px;width:26px;height:20px;background:#666666;"></div>
<div style="left:25px;top:368px;width:2px;height:21px;background:#1f7a45;"></div>
<div style="left:1px;top:388px;width:25px;height:1px;background:#b4b4b4;"></div>
<div class="t" style="top:370px;font-size:13.5px;line-height:20px;color:#ffffff;letter-spacing:-0.9px;left:-486.15px;width:1000px;text-align:center;text-indent:-0.9px;">22</div>
<div style="left:1px;top:409px;width:25px;height:1px;background:#b4b4b4;"></div>
<div class="t" style="top:390px;font-size:13.5px;line-height:20px;color:#ffffff;letter-spacing:-0.9px;left:-486.15px;width:1000px;text-align:center;text-indent:-0.9px;">23</div>
<div style="left:1px;top:429px;width:25px;height:1px;background:#b4b4b4;"></div>
<div class="t" style="top:411px;font-size:13.5px;line-height:20px;color:#ffffff;letter-spacing:-0.9px;left:-486.15px;width:1000px;text-align:center;text-indent:-0.9px;">24</div>
<div style="left:1px;top:450px;width:25px;height:1px;background:#b4b4b4;"></div>
<div class="t" style="top:431px;font-size:13.5px;line-height:20px;color:#ffffff;letter-spacing:-0.9px;left:-486.15px;width:1000px;text-align:center;text-indent:-0.9px;">25</div>
<div style="left:1px;top:470px;width:25px;height:1px;background:#b4b4b4;"></div>
<div class="t" style="top:452px;font-size:13.5px;line-height:20px;color:#ffffff;letter-spacing:-0.9px;left:-486.15px;width:1000px;text-align:center;text-indent:-0.9px;">26</div>
<div style="left:1px;top:491px;width:25px;height:1px;background:#b4b4b4;"></div>
<div class="t" style="top:472px;font-size:13.5px;line-height:20px;color:#ffffff;letter-spacing:-0.9px;left:-486.15px;width:1000px;text-align:center;text-indent:-0.9px;">27</div>
<div style="left:1px;top:511px;width:25px;height:1px;background:#b4b4b4;"></div>
<div class="t" style="top:493px;font-size:13.5px;line-height:20px;color:#ffffff;letter-spacing:-0.9px;left:-486.15px;width:1000px;text-align:center;text-indent:-0.9px;">28</div>
<div style="left:1px;top:531px;width:25px;height:1px;background:#b4b4b4;"></div>
<div class="t" style="top:513px;font-size:13.5px;line-height:20px;color:#ffffff;letter-spacing:-0.9px;left:-486.15px;width:1000px;text-align:center;text-indent:-0.9px;">29</div>
<div style="left:1px;top:551px;width:25px;height:1px;background:#b4b4b4;"></div>
<div class="t" style="top:533px;font-size:13.5px;line-height:20px;color:#ffffff;letter-spacing:-0.9px;left:-486.15px;width:1000px;text-align:center;text-indent:-0.9px;">30</div>
<div style="left:1px;top:571px;width:25px;height:1px;background:#b4b4b4;"></div>
<div class="t" style="top:553px;font-size:13.5px;line-height:20px;color:#ffffff;letter-spacing:-0.9px;left:-486.15px;width:1000px;text-align:center;text-indent:-0.9px;">31</div>
<div style="left:1px;top:591px;width:25px;height:1px;background:#b4b4b4;"></div>
<div class="t" style="top:573px;font-size:13.5px;line-height:20px;color:#ffffff;letter-spacing:-0.9px;left:-486.15px;width:1000px;text-align:center;text-indent:-0.9px;">32</div>
<div style="left:1px;top:611px;width:25px;height:1px;background:#b4b4b4;"></div>
<div class="t" style="top:593px;font-size:13.5px;line-height:20px;color:#ffffff;letter-spacing:-0.9px;left:-486.15px;width:1000px;text-align:center;text-indent:-0.9px;">33</div>
<div style="left:1px;top:631px;width:25px;height:1px;background:#b4b4b4;"></div>
<div class="t" style="top:613px;font-size:13.5px;line-height:20px;color:#ffffff;letter-spacing:-0.9px;left:-486.15px;width:1000px;text-align:center;text-indent:-0.9px;">34</div>
<div style="left:1px;top:651px;width:25px;height:1px;background:#b4b4b4;"></div>
<div class="t" style="top:633px;font-size:13.5px;line-height:20px;color:#ffffff;letter-spacing:-0.9px;left:-486.15px;width:1000px;text-align:center;text-indent:-0.9px;">35</div>
<div style="left:1px;top:671px;width:25px;height:1px;background:#b4b4b4;"></div>
<div class="t" style="top:653px;font-size:13.5px;line-height:20px;color:#ffffff;letter-spacing:-0.9px;left:-486.15px;width:1000px;text-align:center;text-indent:-0.9px;">36</div>
<div style="left:1px;top:691px;width:25px;height:1px;background:#b4b4b4;"></div>
<div class="t" style="top:673px;font-size:13.5px;line-height:20px;color:#ffffff;letter-spacing:-0.9px;left:-486.15px;width:1000px;text-align:center;text-indent:-0.9px;">37</div>
<div style="left:1px;top:711px;width:25px;height:1px;background:#b4b4b4;"></div>
<div class="t" style="top:693px;font-size:13.5px;line-height:20px;color:#ffffff;letter-spacing:-0.9px;left:-486.15px;width:1000px;text-align:center;text-indent:-0.9px;">38</div>
<div style="left:1px;top:731px;width:25px;height:1px;background:#b4b4b4;"></div>
<div class="t" style="top:713px;font-size:13.5px;line-height:20px;color:#ffffff;letter-spacing:-0.9px;left:-486.15px;width:1000px;text-align:center;text-indent:-0.9px;">39</div>
<div style="left:1px;top:751px;width:25px;height:1px;background:#b4b4b4;"></div>
<div class="t" style="top:733px;font-size:13.5px;line-height:20px;color:#ffffff;letter-spacing:-0.9px;left:-486.15px;width:1000px;text-align:center;text-indent:-0.9px;">40</div>
<div style="left:1px;top:772px;width:25px;height:1px;background:#b4b4b4;"></div>
<div class="t" style="top:753px;font-size:13.5px;line-height:20px;color:#ffffff;letter-spacing:-0.9px;left:-486.15px;width:1000px;text-align:center;text-indent:-0.9px;">41</div>
<div style="left:1px;top:792px;width:25px;height:1px;background:#b4b4b4;"></div>
<div class="t" style="top:774px;font-size:13.5px;line-height:20px;color:#ffffff;letter-spacing:-0.9px;left:-486.15px;width:1000px;text-align:center;text-indent:-0.9px;">42</div>
<div style="left:1px;top:812px;width:25px;height:1px;background:#b4b4b4;"></div>
<div class="t" style="top:794px;font-size:13.5px;line-height:20px;color:#ffffff;letter-spacing:-0.9px;left:-486.15px;width:1000px;text-align:center;text-indent:-0.9px;">43</div>
<div style="left:1px;top:832px;width:25px;height:1px;background:#b4b4b4;"></div>
<div class="t" style="top:814px;font-size:13.5px;line-height:20px;color:#ffffff;letter-spacing:-0.9px;left:-486.15px;width:1000px;text-align:center;text-indent:-0.9px;">44</div>
<div style="left:1px;top:852px;width:25px;height:1px;background:#b4b4b4;"></div>
<div class="t" style="top:834px;font-size:13.5px;line-height:20px;color:#ffffff;letter-spacing:-0.9px;left:-486.15px;width:1000px;text-align:center;text-indent:-0.9px;">45</div>
<div style="left:1px;top:872px;width:25px;height:1px;background:#b4b4b4;"></div>
<div class="t" style="top:854px;font-size:13.5px;line-height:20px;color:#ffffff;letter-spacing:-0.9px;left:-486.15px;width:1000px;text-align:center;text-indent:-0.9px;">46</div>
<div style="left:1px;top:892px;width:25px;height:1px;background:#b4b4b4;"></div>
<div class="t" style="top:874px;font-size:13.5px;line-height:20px;color:#ffffff;letter-spacing:-0.9px;left:-486.15px;width:1000px;text-align:center;text-indent:-0.9px;">47</div>
<div style="left:1px;top:912px;width:25px;height:1px;background:#b4b4b4;"></div>
<div class="t" style="top:894px;font-size:13.5px;line-height:20px;color:#ffffff;letter-spacing:-0.9px;left:-486.15px;width:1000px;text-align:center;text-indent:-0.9px;">48</div>
<div style="left:1px;top:932px;width:25px;height:1px;background:#b4b4b4;"></div>
<div class="t" style="top:914px;font-size:13.5px;line-height:20px;color:#ffffff;letter-spacing:-0.9px;left:-486.15px;width:1000px;text-align:center;text-indent:-0.9px;">49</div>
<div style="left:1px;top:952px;width:25px;height:1px;background:#b4b4b4;"></div>
<div class="t" style="top:934px;font-size:13.5px;line-height:20px;color:#ffffff;letter-spacing:-0.9px;left:-486.15px;width:1000px;text-align:center;text-indent:-0.9px;">50</div>
<div style="left:1px;top:972px;width:25px;height:1px;background:#b4b4b4;"></div>
<div class="t" style="top:954px;font-size:13.5px;line-height:20px;color:#ffffff;letter-spacing:-0.9px;left:-486.15px;width:1000px;text-align:center;text-indent:-0.9px;">51</div>
<div class="t" style="top:974px;font-size:13.5px;line-height:20px;color:#ffffff;letter-spacing:-0.9px;left:-486.15px;width:1000px;text-align:center;text-indent:-0.9px;clip-path:inset(0 0 6.5px 0);">52</div>
<div style="left:42px;top:248px;width:646px;height:1px;background:#7f7f7f;"></div>
<div style="left:42px;top:268px;width:646px;height:1px;background:#7f7f7f;"></div>
<div style="left:42px;top:288px;width:646px;height:1px;background:#7f7f7f;"></div>
<div style="left:42px;top:308px;width:646px;height:1px;background:#7f7f7f;"></div>
<div style="left:42px;top:328px;width:646px;height:1px;background:#7f7f7f;"></div>
<div style="left:42px;top:348px;width:646px;height:1px;background:#7f7f7f;"></div>
<div style="left:42px;top:368px;width:646px;height:1px;background:#7f7f7f;"></div>
<div style="left:42px;top:388px;width:646px;height:1px;background:#7f7f7f;"></div>
<div style="left:42px;top:408px;width:646px;height:2px;background:#7f7f7f;"></div>
<div style="left:42px;top:449px;width:646px;height:2px;background:#7f7f7f;"></div>
<div style="left:42px;top:490px;width:646px;height:2px;background:#7f7f7f;"></div>
<div style="left:42px;top:511px;width:646px;height:1px;background:#7f7f7f;"></div>
<div style="left:42px;top:531px;width:646px;height:1px;background:#7f7f7f;"></div>
<div style="left:42px;top:551px;width:646px;height:1px;background:#7f7f7f;"></div>
<div style="left:42px;top:571px;width:646px;height:1px;background:#7f7f7f;"></div>
<div style="left:42px;top:591px;width:646px;height:1px;background:#7f7f7f;"></div>
<div style="left:42px;top:611px;width:646px;height:1px;background:#7f7f7f;"></div>
<div style="left:42px;top:631px;width:646px;height:1px;background:#7f7f7f;"></div>
<div style="left:42px;top:651px;width:646px;height:1px;background:#7f7f7f;"></div>
<div style="left:42px;top:671px;width:646px;height:1px;background:#7f7f7f;"></div>
<div style="left:42px;top:691px;width:646px;height:1px;background:#7f7f7f;"></div>
<div style="left:42px;top:711px;width:646px;height:1px;background:#7f7f7f;"></div>
<div style="left:42px;top:731px;width:646px;height:1px;background:#7f7f7f;"></div>
<div style="left:42px;top:751px;width:646px;height:1px;background:#7f7f7f;"></div>
<div style="left:42px;top:771px;width:646px;height:2px;background:#7f7f7f;"></div>
<div class="t" style="top:250px;font-size:13.4px;line-height:20px;color:#000;letter-spacing:-0.521px;left:45.3px;">$I$3</div>
<div class="t" style="top:250px;font-size:13.4px;line-height:20px;color:#000;letter-spacing:0.263px;left:90.3px;">Number of acres Alfalfa NW</div>
<div class="t" style="top:250px;font-size:13.4px;line-height:20px;color:#000;right:1570.45px;letter-spacing:-0.45px;">165.5172414</div>
<div class="t" style="top:250px;font-size:13.4px;line-height:20px;color:#000;right:1480.45px;letter-spacing:-0.45px;">0</div>
<div class="t" style="top:250px;font-size:13.4px;line-height:20px;color:#000;right:1405.45px;letter-spacing:-0.45px;">60</div>
<div class="t" style="top:250px;font-size:13.4px;line-height:20px;color:#000;right:1321.45px;letter-spacing:-0.45px;">31.14285714</div>
<div class="t" style="top:250px;font-size:13.4px;line-height:20px;color:#000;right:1237.45px;letter-spacing:-0.45px;">5.68434E-14</div>
<div class="t" style="top:270px;font-size:13.4px;line-height:20px;color:#000;letter-spacing:-1.149px;left:45.3px;">$J$3</div>
<div class="t" style="top:270px;font-size:13.4px;line-height:20px;color:#000;letter-spacing:0.252px;left:90.3px;">Number of acres Alfalfa W</div>
<div class="t" style="top:270px;font-size:13.4px;line-height:20px;color:#000;right:1570.45px;letter-spacing:-0.45px;">0</div>
<div class="t" style="top:270px;font-size:13.4px;line-height:20px;color:#000;right:1480.45px;letter-spacing:-0.45px;">-5.68434E-14</div>
<div class="t" style="top:270px;font-size:13.4px;line-height:20px;color:#000;right:1405.45px;letter-spacing:-0.45px;">60</div>
<div class="t" style="top:270px;font-size:13.4px;line-height:20px;color:#000;right:1321.45px;letter-spacing:-0.45px;">5.68434E-14</div>
<div class="t" style="top:270px;font-size:13.4px;line-height:20px;color:#000;right:1237.45px;letter-spacing:-0.45px;">1E+30</div>
<div class="t" style="top:290px;font-size:13.4px;line-height:20px;color:#000;letter-spacing:-0.927px;left:45.3px;">$K$3</div>
<div class="t" style="top:290px;font-size:13.4px;line-height:20px;color:#000;letter-spacing:0.177px;left:90.3px;">Number of acres Alfalfa SW</div>
<div class="t" style="top:290px;font-size:13.4px;line-height:20px;color:#000;right:1570.45px;letter-spacing:-0.45px;">0</div>
<div class="t" style="top:290px;font-size:13.4px;line-height:20px;color:#000;right:1480.45px;letter-spacing:-0.45px;">-5.68434E-14</div>
<div class="t" style="top:290px;font-size:13.4px;line-height:20px;color:#000;right:1405.45px;letter-spacing:-0.45px;">60</div>
<div class="t" style="top:290px;font-size:13.4px;line-height:20px;color:#000;right:1321.45px;letter-spacing:-0.45px;">5.68434E-14</div>
<div class="t" style="top:290px;font-size:13.4px;line-height:20px;color:#000;right:1237.45px;letter-spacing:-0.45px;">1E+30</div>
<div class="t" style="top:310px;font-size:13.4px;line-height:20px;color:#000;letter-spacing:-1.032px;left:45.3px;">$L$3</div>
<div class="t" style="top:310px;font-size:13.4px;line-height:20px;color:#000;letter-spacing:-0.056px;left:90.3px;">Number of acres Barley SE</div>
<div class="t" style="top:310px;font-size:13.4px;line-height:20px;color:#000;right:1570.45px;letter-spacing:-0.45px;">7.10543E-14</div>
<div class="t" style="top:310px;font-size:13.4px;line-height:20px;color:#000;right:1480.45px;letter-spacing:-0.45px;">0</div>
<div class="t" style="top:310px;font-size:13.4px;line-height:20px;color:#000;right:1405.45px;letter-spacing:-0.45px;">110</div>
<div class="t" style="top:310px;font-size:13.4px;line-height:20px;color:#000;right:1321.45px;letter-spacing:-0.45px;">0</div>
<div class="t" style="top:310px;font-size:13.4px;line-height:20px;color:#000;right:1237.45px;letter-spacing:-0.45px;">0</div>
<div class="t" style="top:330px;font-size:13.4px;line-height:20px;color:#000;letter-spacing:-0.2px;left:45.3px;">$M$3</div>
<div class="t" style="top:330px;font-size:13.4px;line-height:20px;color:#000;letter-spacing:0.107px;left:90.3px;">Number of acres Barley N</div>
<div class="t" style="top:330px;font-size:13.4px;line-height:20px;color:#000;right:1570.45px;letter-spacing:-0.45px;">880</div>
<div class="t" style="top:330px;font-size:13.4px;line-height:20px;color:#000;right:1480.45px;letter-spacing:-0.45px;">0</div>
<div class="t" style="top:330px;font-size:13.4px;line-height:20px;color:#000;right:1405.45px;letter-spacing:-0.45px;">110</div>
<div class="t" style="top:330px;font-size:13.4px;line-height:20px;color:#000;right:1321.45px;letter-spacing:-0.45px;">0</div>
<div class="t" style="top:330px;font-size:13.4px;line-height:20px;color:#000;right:1237.45px;letter-spacing:-0.45px;">0</div>
<div class="t" style="top:350px;font-size:13.4px;line-height:20px;color:#000;letter-spacing:-0.439px;left:45.3px;">$N$3</div>
<div class="t" style="top:350px;font-size:13.4px;line-height:20px;color:#000;letter-spacing:0.138px;left:90.3px;">Number of acres Barley NW</div>
<div class="t" style="top:350px;font-size:13.4px;line-height:20px;color:#000;right:1570.45px;letter-spacing:-0.45px;">91.42857143</div>
<div class="t" style="top:350px;font-size:13.4px;line-height:20px;color:#000;right:1480.45px;letter-spacing:-0.45px;">0</div>
<div class="t" style="top:350px;font-size:13.4px;line-height:20px;color:#000;right:1405.45px;letter-spacing:-0.45px;">110</div>
<div class="t" style="top:350px;font-size:13.4px;line-height:20px;color:#000;right:1321.45px;letter-spacing:-0.45px;">6.86041E-14</div>
<div class="t" style="top:350px;font-size:13.4px;line-height:20px;color:#000;right:1237.45px;letter-spacing:-0.45px;">0</div>
<div class="t" style="top:370px;font-size:13.4px;line-height:20px;color:#000;letter-spacing:-0.689px;left:45.3px;">$O$3</div>
<div class="t" style="top:370px;font-size:13.4px;line-height:20px;color:#000;letter-spacing:0.121px;left:90.3px;">Number of acres Barley W</div>
<div class="t" style="top:370px;font-size:13.4px;line-height:20px;color:#000;right:1570.45px;letter-spacing:-0.45px;">28.57142857</div>
<div class="t" style="top:370px;font-size:13.4px;line-height:20px;color:#000;right:1480.45px;letter-spacing:-0.45px;">0</div>
<div class="t" style="top:370px;font-size:13.4px;line-height:20px;color:#000;right:1405.45px;letter-spacing:-0.45px;">110</div>
<div class="t" style="top:370px;font-size:13.4px;line-height:20px;color:#000;right:1321.45px;letter-spacing:-0.45px;">0</div>
<div class="t" style="top:370px;font-size:13.4px;line-height:20px;color:#000;right:1237.45px;letter-spacing:-0.45px;">0</div>
<div class="t" style="top:390px;font-size:13.4px;line-height:20px;color:#000;letter-spacing:-0.927px;left:45.3px;">$P$3</div>
<div class="t" style="top:390px;font-size:13.4px;line-height:20px;color:#000;letter-spacing:0.048px;left:90.3px;">Number of acres Barley SW</div>
<div class="t" style="top:390px;font-size:13.4px;line-height:20px;color:#000;right:1570.45px;letter-spacing:-0.45px;">0</div>
<div class="t" style="top:390px;font-size:13.4px;line-height:20px;color:#000;right:1480.45px;letter-spacing:-0.45px;">-66.89655172</div>
<div class="t" style="top:390px;font-size:13.4px;line-height:20px;color:#000;right:1405.45px;letter-spacing:-0.45px;">110</div>
<div class="t" style="top:390px;font-size:13.4px;line-height:20px;color:#000;right:1321.45px;letter-spacing:-0.45px;">66.89655172</div>
<div class="t" style="top:390px;font-size:13.4px;line-height:20px;color:#000;right:1237.45px;letter-spacing:-0.45px;">1E+30</div>
<div class="t" style="top:493px;font-size:13.4px;line-height:20px;color:#000;letter-spacing:-0.555px;left:45.3px;">$Q$10</div>
<div class="t" style="top:493px;font-size:13.4px;line-height:20px;color:#000;letter-spacing:-0.596px;left:90.3px;">SW acreage LHS</div>
<div class="t" style="top:493px;font-size:13.4px;line-height:20px;color:#000;right:1570.45px;letter-spacing:-0.45px;">0</div>
<div class="t" style="top:493px;font-size:13.4px;line-height:20px;color:#000;right:1480.45px;letter-spacing:-0.45px;">0</div>
<div class="t" style="top:493px;font-size:13.4px;line-height:20px;color:#000;right:1405.45px;letter-spacing:-0.45px;">500</div>
<div class="t" style="top:493px;font-size:13.4px;line-height:20px;color:#000;right:1321.45px;letter-spacing:-0.45px;">1E+30</div>
<div class="t" style="top:493px;font-size:13.4px;line-height:20px;color:#000;right:1237.45px;letter-spacing:-0.45px;">500</div>
<div class="t" style="top:513px;font-size:13.4px;line-height:20px;color:#000;letter-spacing:-0.305px;left:45.3px;">$Q$11</div>
<div class="t" style="top:513px;font-size:13.4px;line-height:20px;color:#000;letter-spacing:-0.237px;left:90.3px;">Wheat acreage LHS</div>
<div class="t" style="top:513px;font-size:13.4px;line-height:20px;color:#000;right:1570.45px;letter-spacing:-0.45px;">2200</div>
<div class="t" style="top:513px;font-size:13.4px;line-height:20px;color:#000;right:1480.45px;letter-spacing:-0.45px;">66.89655172</div>
<div class="t" style="top:513px;font-size:13.4px;line-height:20px;color:#000;right:1405.45px;letter-spacing:-0.45px;">2200</div>
<div class="t" style="top:513px;font-size:13.4px;line-height:20px;color:#000;right:1321.45px;letter-spacing:-0.45px;">300</div>
<div class="t" style="top:513px;font-size:13.4px;line-height:20px;color:#000;right:1237.45px;letter-spacing:-0.45px;">200</div>
<div class="t" style="top:533px;font-size:13.4px;line-height:20px;color:#000;letter-spacing:-0.555px;left:45.3px;">$Q$12</div>
<div class="t" style="top:533px;font-size:13.4px;line-height:20px;color:#000;letter-spacing:-0.128px;left:90.3px;">Alfalfa acreage LHS</div>
<div class="t" style="top:533px;font-size:13.4px;line-height:20px;color:#000;right:1570.45px;letter-spacing:-0.45px;">165.5172414</div>
<div class="t" style="top:533px;font-size:13.4px;line-height:20px;color:#000;right:1480.45px;letter-spacing:-0.45px;">0</div>
<div class="t" style="top:533px;font-size:13.4px;line-height:20px;color:#000;right:1405.45px;letter-spacing:-0.45px;">1200</div>
<div class="t" style="top:533px;font-size:13.4px;line-height:20px;color:#000;right:1321.45px;letter-spacing:-0.45px;">1E+30</div>
<div class="t" style="top:533px;font-size:13.4px;line-height:20px;color:#000;right:1237.45px;letter-spacing:-0.45px;">1034.482759</div>
<div class="t" style="top:553px;font-size:13.4px;line-height:20px;color:#000;letter-spacing:-0.555px;left:45.3px;">$Q$13</div>
<div class="t" style="top:553px;font-size:13.4px;line-height:20px;color:#000;letter-spacing:-0.308px;left:90.3px;">Barley acreage LHS</div>
<div class="t" style="top:553px;font-size:13.4px;line-height:20px;color:#000;right:1570.45px;letter-spacing:-0.45px;">1000</div>
<div class="t" style="top:553px;font-size:13.4px;line-height:20px;color:#000;right:1480.45px;letter-spacing:-0.45px;">37.5862069</div>
<div class="t" style="top:553px;font-size:13.4px;line-height:20px;color:#000;right:1405.45px;letter-spacing:-0.45px;">1000</div>
<div class="t" style="top:553px;font-size:13.4px;line-height:20px;color:#000;right:1321.45px;letter-spacing:-0.45px;">137.1428571</div>
<div class="t" style="top:553px;font-size:13.4px;line-height:20px;color:#000;right:1237.45px;letter-spacing:-0.45px;">91.42857143</div>
<div class="t" style="top:573px;font-size:13.4px;line-height:20px;color:#000;letter-spacing:-0.555px;left:45.3px;">$Q$14</div>
<div class="t" style="top:573px;font-size:13.4px;line-height:20px;color:#000;letter-spacing:-0.574px;left:90.3px;">SE water LHS</div>
<div class="t" style="top:573px;font-size:13.4px;line-height:20px;color:#000;right:1570.45px;letter-spacing:-0.45px;">3200</div>
<div class="t" style="top:573px;font-size:13.4px;line-height:20px;color:#000;right:1480.45px;letter-spacing:-0.45px;">0</div>
<div class="t" style="top:573px;font-size:13.4px;line-height:20px;color:#000;right:1405.45px;letter-spacing:-0.45px;">3200</div>
<div class="t" style="top:573px;font-size:13.4px;line-height:20px;color:#000;right:1321.45px;letter-spacing:-0.45px;">100</div>
<div class="t" style="top:573px;font-size:13.4px;line-height:20px;color:#000;right:1237.45px;letter-spacing:-0.45px;">1.35003E-13</div>
<div class="t" style="top:593px;font-size:13.4px;line-height:20px;color:#000;letter-spacing:-0.555px;left:45.3px;">$Q$15</div>
<div class="t" style="top:593px;font-size:13.4px;line-height:20px;color:#000;letter-spacing:-0.211px;left:90.3px;">N water LHS</div>
<div class="t" style="top:593px;font-size:13.4px;line-height:20px;color:#000;right:1570.45px;letter-spacing:-0.45px;">3400</div>
<div class="t" style="top:593px;font-size:13.4px;line-height:20px;color:#000;right:1480.45px;letter-spacing:-0.45px;">0</div>
<div class="t" style="top:593px;font-size:13.4px;line-height:20px;color:#000;right:1405.45px;letter-spacing:-0.45px;">3400</div>
<div class="t" style="top:593px;font-size:13.4px;line-height:20px;color:#000;right:1321.45px;letter-spacing:-0.45px;">100</div>
<div class="t" style="top:593px;font-size:13.4px;line-height:20px;color:#000;right:1237.45px;letter-spacing:-0.45px;">400</div>
<div class="t" style="top:613px;font-size:13.4px;line-height:20px;color:#000;letter-spacing:-0.555px;left:45.3px;">$Q$16</div>
<div class="t" style="top:613px;font-size:13.4px;line-height:20px;color:#000;letter-spacing:-0.15px;left:90.3px;">NW water LHS</div>
<div class="t" style="top:613px;font-size:13.4px;line-height:20px;color:#000;right:1570.45px;letter-spacing:-0.45px;">800</div>
<div class="t" style="top:613px;font-size:13.4px;line-height:20px;color:#000;right:1480.45px;letter-spacing:-0.45px;">0</div>
<div class="t" style="top:613px;font-size:13.4px;line-height:20px;color:#000;right:1405.45px;letter-spacing:-0.45px;">800</div>
<div class="t" style="top:613px;font-size:13.4px;line-height:20px;color:#000;right:1321.45px;letter-spacing:-0.45px;">100</div>
<div class="t" style="top:613px;font-size:13.4px;line-height:20px;color:#000;right:1237.45px;letter-spacing:-0.45px;">320</div>
<div class="t" style="top:633px;font-size:13.4px;line-height:20px;color:#000;letter-spacing:-0.555px;left:45.3px;">$Q$17</div>
<div class="t" style="top:633px;font-size:13.4px;line-height:20px;color:#000;letter-spacing:-0.217px;left:90.3px;">W water LHS</div>
<div class="t" style="top:633px;font-size:13.4px;line-height:20px;color:#000;right:1570.45px;letter-spacing:-0.45px;">100</div>
<div class="t" style="top:633px;font-size:13.4px;line-height:20px;color:#000;right:1480.45px;letter-spacing:-0.45px;">0</div>
<div class="t" style="top:633px;font-size:13.4px;line-height:20px;color:#000;right:1405.45px;letter-spacing:-0.45px;">500</div>
<div class="t" style="top:633px;font-size:13.4px;line-height:20px;color:#000;right:1321.45px;letter-spacing:-0.45px;">1E+30</div>
<div class="t" style="top:633px;font-size:13.4px;line-height:20px;color:#000;right:1237.45px;letter-spacing:-0.45px;">400</div>
<div class="t" style="top:653px;font-size:13.4px;line-height:20px;color:#000;letter-spacing:-0.555px;left:45.3px;">$Q$18</div>
<div class="t" style="top:653px;font-size:13.4px;line-height:20px;color:#000;letter-spacing:-0.347px;left:90.3px;">SW water LHS</div>
<div class="t" style="top:653px;font-size:13.4px;line-height:20px;color:#000;right:1570.45px;letter-spacing:-0.45px;">0</div>
<div class="t" style="top:653px;font-size:13.4px;line-height:20px;color:#000;right:1480.45px;letter-spacing:-0.45px;">0</div>
<div class="t" style="top:653px;font-size:13.4px;line-height:20px;color:#000;right:1405.45px;letter-spacing:-0.45px;">600</div>
<div class="t" style="top:653px;font-size:13.4px;line-height:20px;color:#000;right:1321.45px;letter-spacing:-0.45px;">1E+30</div>
<div class="t" style="top:653px;font-size:13.4px;line-height:20px;color:#000;right:1237.45px;letter-spacing:-0.45px;">600</div>
<div class="t" style="top:673px;font-size:13.4px;line-height:20px;color:#000;letter-spacing:-0.555px;left:45.3px;">$Q$19</div>
<div class="t" style="top:673px;font-size:13.4px;line-height:20px;color:#000;letter-spacing:0.026px;left:90.3px;">Total water LHS</div>
<div class="t" style="top:673px;font-size:13.4px;line-height:20px;color:#000;right:1570.45px;letter-spacing:-0.45px;">7500</div>
<div class="t" style="top:673px;font-size:13.4px;line-height:20px;color:#000;right:1480.45px;letter-spacing:-0.45px;">20.68965517</div>
<div class="t" style="top:673px;font-size:13.4px;line-height:20px;color:#000;right:1405.45px;letter-spacing:-0.45px;">7500</div>
<div class="t" style="top:673px;font-size:13.4px;line-height:20px;color:#000;right:1321.45px;letter-spacing:-0.45px;">320</div>
<div class="t" style="top:673px;font-size:13.4px;line-height:20px;color:#000;right:1237.45px;letter-spacing:-0.45px;">100</div>
<div class="t" style="top:693px;font-size:13.4px;line-height:20px;color:#000;letter-spacing:-0.555px;left:45.3px;">$Q$6</div>
<div class="t" style="top:693px;font-size:13.4px;line-height:20px;color:#000;letter-spacing:-0.765px;left:90.3px;">SE acreage LHS</div>
<div class="t" style="top:693px;font-size:13.4px;line-height:20px;color:#000;right:1570.45px;letter-spacing:-0.45px;">2000</div>
<div class="t" style="top:693px;font-size:13.4px;line-height:20px;color:#000;right:1480.45px;letter-spacing:-0.45px;">0</div>
<div class="t" style="top:693px;font-size:13.4px;line-height:20px;color:#000;right:1405.45px;letter-spacing:-0.45px;">2000</div>
<div class="t" style="top:693px;font-size:13.4px;line-height:20px;color:#000;right:1321.45px;letter-spacing:-0.45px;">8.43769E-14</div>
<div class="t" style="top:693px;font-size:13.4px;line-height:20px;color:#000;right:1237.45px;letter-spacing:-0.45px;">1045</div>
<div class="t" style="top:713px;font-size:13.4px;line-height:20px;color:#000;letter-spacing:-0.555px;left:45.3px;">$Q$7</div>
<div class="t" style="top:713px;font-size:13.4px;line-height:20px;color:#000;letter-spacing:-0.48px;left:90.3px;">N acreage LHS</div>
<div class="t" style="top:713px;font-size:13.4px;line-height:20px;color:#000;right:1570.45px;letter-spacing:-0.45px;">1080</div>
<div class="t" style="top:713px;font-size:13.4px;line-height:20px;color:#000;right:1480.45px;letter-spacing:-0.45px;">0</div>
<div class="t" style="top:713px;font-size:13.4px;line-height:20px;color:#000;right:1405.45px;letter-spacing:-0.45px;">2300</div>
<div class="t" style="top:713px;font-size:13.4px;line-height:20px;color:#000;right:1321.45px;letter-spacing:-0.45px;">1E+30</div>
<div class="t" style="top:713px;font-size:13.4px;line-height:20px;color:#000;right:1237.45px;letter-spacing:-0.45px;">1220</div>
<div class="t" style="top:733px;font-size:13.4px;line-height:20px;color:#000;letter-spacing:-0.555px;left:45.3px;">$Q$8</div>
<div class="t" style="top:733px;font-size:13.4px;line-height:20px;color:#000;letter-spacing:-0.4px;left:90.3px;">NW acreage LHS</div>
<div class="t" style="top:733px;font-size:13.4px;line-height:20px;color:#000;right:1570.45px;letter-spacing:-0.45px;">256.9458128</div>
<div class="t" style="top:733px;font-size:13.4px;line-height:20px;color:#000;right:1480.45px;letter-spacing:-0.45px;">0</div>
<div class="t" style="top:733px;font-size:13.4px;line-height:20px;color:#000;right:1405.45px;letter-spacing:-0.45px;">600</div>
<div class="t" style="top:733px;font-size:13.4px;line-height:20px;color:#000;right:1321.45px;letter-spacing:-0.45px;">1E+30</div>
<div class="t" style="top:733px;font-size:13.4px;line-height:20px;color:#000;right:1237.45px;letter-spacing:-0.45px;">343.0541872</div>
<div class="t" style="top:753px;font-size:13.4px;line-height:20px;color:#000;letter-spacing:-0.555px;left:45.3px;">$Q$9</div>
<div class="t" style="top:753px;font-size:13.4px;line-height:20px;color:#000;letter-spacing:-0.478px;left:90.3px;">W acreage LHS</div>
<div class="t" style="top:753px;font-size:13.4px;line-height:20px;color:#000;right:1570.45px;letter-spacing:-0.45px;">28.57142857</div>
<div class="t" style="top:753px;font-size:13.4px;line-height:20px;color:#000;right:1480.45px;letter-spacing:-0.45px;">0</div>
<div class="t" style="top:753px;font-size:13.4px;line-height:20px;color:#000;right:1405.45px;letter-spacing:-0.45px;">1100</div>
<div class="t" style="top:753px;font-size:13.4px;line-height:20px;color:#000;right:1321.45px;letter-spacing:-0.45px;">1E+30</div>
<div class="t" style="top:753px;font-size:13.4px;line-height:20px;color:#000;right:1237.45px;letter-spacing:-0.45px;">1071.428571</div>
<div class="t" style="top:431px;font-size:13.4px;line-height:20px;color:#000;letter-spacing:0.227px;left:29.3px;">Constraints</div>
<div class="t" style="top:452px;font-size:13.4px;line-height:20px;color:#000080;font-weight:700;letter-spacing:-0.387px;left:-188px;width:1000px;text-align:center;text-indent:-0.387px;">Final</div>
<div class="t" style="top:452px;font-size:13.4px;line-height:20px;color:#000080;font-weight:700;letter-spacing:-0.449px;left:-101px;width:1000px;text-align:center;text-indent:-0.449px;">Shadow</div>
<div class="t" style="top:452px;font-size:13.4px;line-height:20px;color:#000080;font-weight:700;letter-spacing:-0.352px;left:-18.5px;width:1000px;text-align:center;text-indent:-0.352px;">Constraint</div>
<div class="t" style="top:452px;font-size:13.4px;line-height:20px;color:#000080;font-weight:700;letter-spacing:0.073px;left:61px;width:1000px;text-align:center;text-indent:0.073px;">Allowable</div>
<div class="t" style="top:452px;font-size:13.4px;line-height:20px;color:#000080;font-weight:700;letter-spacing:0.073px;left:145px;width:1000px;text-align:center;text-indent:0.073px;">Allowable</div>
<div class="t" style="top:472px;font-size:13.4px;line-height:20px;color:#000080;font-weight:700;letter-spacing:-0.321px;left:-435.5px;width:1000px;text-align:center;text-indent:-0.321px;">Cell</div>
<div class="t" style="top:472px;font-size:13.4px;line-height:20px;color:#000080;font-weight:700;letter-spacing:0.039px;left:-321.5px;width:1000px;text-align:center;text-indent:0.039px;">Name</div>
<div class="t" style="top:472px;font-size:13.4px;line-height:20px;color:#000080;font-weight:700;letter-spacing:0.1px;left:-188px;width:1000px;text-align:center;text-indent:0.1px;">Value</div>
<div class="t" style="top:472px;font-size:13.4px;line-height:20px;color:#000080;font-weight:700;letter-spacing:-0.491px;left:-101px;width:1000px;text-align:center;text-indent:-0.491px;">Price</div>
<div class="t" style="top:472px;font-size:13.4px;line-height:20px;color:#000080;font-weight:700;letter-spacing:-0.485px;left:-18.5px;width:1000px;text-align:center;text-indent:-0.485px;">R.H. Side</div>
<div class="t" style="top:472px;font-size:13.4px;line-height:20px;color:#000080;font-weight:700;letter-spacing:-0.423px;left:61px;width:1000px;text-align:center;text-indent:-0.423px;">Increase</div>
<div class="t" style="top:472px;font-size:13.4px;line-height:20px;color:#000080;font-weight:700;letter-spacing:-0.483px;left:145px;width:1000px;text-align:center;text-indent:-0.483px;">Decrease</div>
<div style="left:1390px;top:367px;width:67px;height:23px;border:2px solid #1f7a45;"></div>
<div style="left:1452px;top:385px;width:7px;height:7px;background:#ffffff;"></div>
<div style="left:1453px;top:386px;width:5px;height:5px;background:#1f7a45;"></div>
<div style="left:1899px;top:227px;width:23px;height:759px;background:#2e2e2e;"></div>
<div style="left:1px;top:986px;width:1921px;height:32px;background:#2e2e2e;"></div>
<svg style="left:28px;top:996px;" width="8" height="12" viewBox="0 0 8 12"><path d="M6.5 1 L1.5 6 L6.5 11" stroke="#8c8c8c" stroke-width="1.2" fill="none"/></svg>
<svg style="left:61px;top:996px;" width="8" height="12" viewBox="0 0 8 12"><path d="M1.5 1 L6.5 6 L1.5 11" stroke="#8c8c8c" stroke-width="1.2" fill="none"/></svg>
<div style="left:204px;top:993px;width:1px;height:18px;background:#8c8c8c;"></div>
<div style="left:332px;top:993px;width:1px;height:18px;background:#8c8c8c;"></div>
<div style="left:478px;top:993px;width:1px;height:18px;background:#8c8c8c;"></div>
<div style="left:572px;top:993px;width:1px;height:18px;background:#8c8c8c;"></div>
<div style="left:702px;top:993px;width:1px;height:18px;background:#8c8c8c;"></div>
<div style="left:850px;top:993px;width:1px;height:18px;background:#8c8c8c;"></div>
<div style="left:703px;top:986px;width:147px;height:5px;background:#ffffff;"></div>
<div style="left:699px;top:986px;width:8px;height:10px;background:#2e2e2e;border-radius:0 5px 0 0;"></div>
<div style="left:846px;top:986px;width:8px;height:10px;background:#2e2e2e;border-radius:5px 0 0 0;"></div>
<div style="left:707px;top:985px;width:139px;height:29px;background:#ffffff;border-radius:0 0 5px 5px;"></div>
<div style="left:715px;top:1009px;width:123px;height:2px;background:#1f7a45;"></div>
<svg style="left:892.5px;top:995.7px;" width="12" height="12" viewBox="0 0 12 12"><path d="M6 0.5 V11.5 M0.5 6 H11.5" stroke="#e6e6e6" stroke-width="1.1"/></svg>
<div style="left:1155px;top:998px;width:2px;height:2px;background:#d8d8d8;"></div>
<div style="left:1155px;top:1002px;width:2px;height:2px;background:#d8d8d8;"></div>
<div style="left:1155px;top:1006px;width:2px;height:2px;background:#d8d8d8;"></div>
<div style="left:1172px;top:992.5px;width:730px;height:17.5px;background:#3c3c3c;border-radius:9px;"></div>
<svg style="left:1176px;top:996.7px;" width="10" height="10" viewBox="0 0 10 10"><path d="M1.5 5 L8.5 0.5 V9.5 Z" fill="#c9c9c9"/></svg>
<svg style="left:1889px;top:996.7px;" width="10" height="10" viewBox="0 0 10 10"><path d="M8.5 5 L1.5 0.5 V9.5 Z" fill="#c9c9c9"/></svg>
<div style="left:1189px;top:997px;width:671px;height:9px;background:#c4c4c4;border-radius:4.5px;"></div>
<div style="left:1px;top:1018px;width:1921px;height:23px;background:#383838;"></div>
<svg style="left:58px;top:1021px;" width="17" height="16" viewBox="0 0 17 16"><circle cx="6.8" cy="2.9" r="1.5" stroke="#f0f0f0" stroke-width="1" fill="none"/><path d="M1.2 4.2 C3 4.9 5 5.1 6.8 5.1 C8.6 5.1 10.6 4.9 12.4 4.2 M1.2 4.2 Q0.3 5.4 1.6 5.9 L4.4 6.6 V10 L2.7 14.2 Q3.3 15.3 4.5 14.7 L6 11.2 M12.4 4.2 Q13.3 5.4 12 5.9 L9.2 6.6 V8.8" stroke="#f0f0f0" stroke-width="1" fill="none" stroke-linejoin="round"/><path d="M7.4 11.7 L10.3 14.6 L16 9.4" stroke="#f0f0f0" stroke-width="1.1" fill="none"/></svg>
<div style="left:1621px;top:1018px;width:40px;height:23px;background:#454545;"></div>
<svg style="left:1634px;top:1022px;" width="13" height="13" viewBox="0 0 13 13"><path d="M0.5 0.5 H12.5 V12.5 H0.5 Z M0.5 4.5 H12.5 M0.5 8.5 H12.5 M4.5 0.5 V12.5 M8.5 0.5 V12.5" stroke="#fff" stroke-width="1" fill="none"/></svg>
<svg style="left:1674px;top:1022px;" width="14" height="13" viewBox="0 0 14 13"><path d="M0.5 0.5 H13.5 V12.5 H0.5 Z" stroke="#fff" stroke-width="1" fill="none"/><path d="M3.5 3.5 H10.5 V9.5 H3.5 Z" stroke="#fff" stroke-width="1" fill="none"/><path d="M5 5.5 H9 M5 7.5 H9" stroke="#fff" stroke-width="0.8"/></svg>
<svg style="left:1714px;top:1022px;" width="14" height="13" viewBox="0 0 14 13"><path d="M0.5 0.5 H13.5 V12.5 H0.5 Z" stroke="#fff" stroke-width="1" fill="none"/><path d="M4.5 0.5 V7.5 M9.5 0.5 V7.5 M0.5 7.5 H9.5" stroke="#fff" stroke-width="1" fill="none"/></svg>
<div style="left:1747px;top:1028px;width:8px;height:1px;background:#e6e6e6;"></div>
<div style="left:1760px;top:1028px;width:100px;height:1px;background:#a0a0a0;"></div>
<div style="left:1808px;top:1024px;width:5px;height:11px;background:#d0d0d0;"></div>
<div style="left:1864.5px;top:1028px;width:9px;height:1px;background:#e6e6e6;"></div>
<div style="left:1868.5px;top:1024px;width:1px;height:9px;background:#e6e6e6;"></div>
<div style="left:1902px;top:227px;width:17px;height:762px;background:#3c3c3c;border-radius:8.5px;"></div>
<svg style="left:1904.5px;top:230.2px;" width="12" height="10" viewBox="0 0 12 10"><path d="M6 1.5 L10.7 8.7 H1.3 Z" fill="#c9c9c9"/></svg>
<svg style="left:1904.5px;top:975.7px;" width="12" height="10" viewBox="0 0 12 10"><path d="M6 8.7 L10.7 1.5 H1.3 Z" fill="#c9c9c9"/></svg>
<div style="left:1906px;top:455px;width:9px;height:502px;background:#c4c4c4;border-radius:4.5px;"></div>
<div style="left:1921px;top:121px;width:1px;height:862px;background:#ffffff;"></div>
<div id="g" style="left:0;top:0;width:1922px;height:1041px;will-change:transform;">
<div class="t" style="top:24px;font-size:12.5px;line-height:18px;color:#ffffff;letter-spacing:-0.603px;left:49px;">AutoSave</div>
<div class="t" style="top:24px;font-size:12.5px;line-height:18px;color:#ffffff;letter-spacing:-0.339px;left:304px;">Assignment 4</div>
<div class="t" style="top:24px;font-size:12.5px;line-height:18px;color:#ffffff;letter-spacing:-1.113px;left:391px;">Saved</div>
<div class="t" style="top:24px;font-size:12.5px;line-height:18px;color:#c8c8c8;letter-spacing:-0.122px;left:784px;">Search</div>
<div class="t" style="top:24px;font-size:12.5px;line-height:18px;color:#ffffff;letter-spacing:-0.359px;left:1562px;">Ethan Williams</div>
<div class="t" style="top:62px;font-size:13px;line-height:20px;color:#ffffff;letter-spacing:-0.751px;left:23.3px;">File</div>
<div class="t" style="top:62px;font-size:13px;line-height:20px;color:#ffffff;font-weight:700;letter-spacing:0.125px;left:68.7px;">Home</div>
<div class="t" style="top:62px;font-size:13px;line-height:20px;color:#ffffff;letter-spacing:-0.103px;left:125px;">Insert</div>
<div class="t" style="top:62px;font-size:13px;line-height:20px;color:#ffffff;letter-spacing:-0.202px;left:180px;">Page Layout</div>
<div class="t" style="top:62px;font-size:13px;line-height:20px;color:#ffffff;letter-spacing:-0.17px;left:273px;">Formulas</div>
<div class="t" style="top:62px;font-size:13px;line-height:20px;color:#ffffff;letter-spacing:-0.156px;left:347px;">Data</div>
<div class="t" style="top:62px;font-size:13px;line-height:20px;color:#ffffff;letter-spacing:-0.525px;left:395px;">Review</div>
<div class="t" style="top:62px;font-size:13px;line-height:20px;color:#ffffff;letter-spacing:-0.318px;left:455px;">View</div>
<div class="t" style="top:62px;font-size:13px;line-height:20px;color:#ffffff;letter-spacing:0.083px;left:502px;">Help</div>
<div class="t" style="top:62px;font-size:13px;line-height:20px;color:#ffffff;letter-spacing:-0.194px;left:1749.2px;">Comments</div>
<div class="t" style="top:62px;font-size:13px;line-height:20px;color:#111;letter-spacing:-0.676px;left:1853.6px;">Share</div>
<div class="t" style="top:199px;font-size:12.5px;line-height:18px;color:#ffffff;letter-spacing:-0.273px;left:16px;">T22</div>
<div class="t" style="top:192px;font-size:18px;line-height:28px;color:#f0f0f0;font-style:italic;font-family:'Liberation Serif',serif;left:185.5px;">f</div>
<div class="t" style="top:197px;font-size:14.5px;line-height:22px;color:#f0f0f0;font-style:italic;font-family:'Liberation Serif',serif;left:192px;">x</div>
<div class="t" style="top:128px;font-size:11.5px;line-height:18px;color:#ffffff;letter-spacing:-0.355px;left:-457.5px;width:1000px;text-align:center;text-indent:-0.355px;">Paste</div>
<div class="t" style="top:94px;font-size:11.5px;line-height:18px;color:#ffffff;letter-spacing:0.547px;left:89px;">Cut</div>
<div class="t" style="top:119px;font-size:11.5px;line-height:18px;color:#ffffff;letter-spacing:0.38px;left:89px;">Copy</div>
<div class="t" style="top:146px;font-size:11.5px;line-height:18px;color:#ffffff;letter-spacing:0.149px;left:89px;">Format Painter</div>
<div class="t" style="top:167px;font-size:11.5px;line-height:18px;color:#ffffff;letter-spacing:0.221px;left:-409.5px;width:1000px;text-align:center;text-indent:0.221px;">Clipboard</div>
<div class="t" style="top:101px;font-size:11.5px;line-height:18px;color:#ffffff;letter-spacing:0.068px;left:196px;">Calibri</div>
<div class="t" style="top:101px;font-size:11.5px;line-height:18px;color:#ffffff;left:321px;">11</div>
<div class="t" style="top:97px;font-size:17px;line-height:26px;color:#dcdcdc;left:-127.5px;width:1000px;text-align:center;">A</div>
<div class="t" style="top:99px;font-size:14px;line-height:22px;color:#dcdcdc;left:-101px;width:1000px;text-align:center;">A</div>
<div class="t" style="top:131px;font-size:13.5px;line-height:20px;color:#d0d0d0;font-weight:700;left:-295.5px;width:1000px;text-align:center;">B</div>
<div class="t" style="top:131px;font-size:14px;line-height:22px;color:#d0d0d0;font-style:italic;font-family:'Liberation Serif',serif;left:-270px;width:1000px;text-align:center;">I</div>
<div class="t" style="top:131px;font-size:13px;line-height:20px;color:#d0d0d0;left:-244.5px;width:1000px;text-align:center;">U</div>
<div class="t" style="top:129px;font-size:14.8px;line-height:22px;color:#dcdcdc;left:-114.5px;width:1000px;text-align:center;">A</div>
<div class="t" style="top:167px;font-size:11.5px;line-height:18px;color:#ffffff;letter-spacing:0.328px;left:-206px;width:1000px;text-align:center;text-indent:0.328px;">Font</div>
<div class="t" style="top:99px;font-size:10px;line-height:16px;color:#d0d0d0;left:513px;transform:rotate(-40deg);">ab</div>
<div class="t" style="top:98px;font-size:9.5px;line-height:14px;color:#d0d0d0;left:578px;">ab</div>
<div class="t" style="top:107px;font-size:9.5px;line-height:14px;color:#d0d0d0;left:578px;">c</div>
<div class="t" style="top:102px;font-size:11.5px;line-height:18px;color:#ffffff;letter-spacing:0.08px;left:596px;">Wrap Text</div>
<div class="t" style="top:134px;font-size:11.5px;line-height:18px;color:#ffffff;letter-spacing:0.293px;left:596px;">Merge &amp; Centre</div>
<div class="t" style="top:167px;font-size:11.5px;line-height:18px;color:#ffffff;letter-spacing:0.232px;left:58px;width:1000px;text-align:center;text-indent:0.232px;">Alignment</div>
<div class="t" style="top:101px;font-size:11.5px;line-height:18px;color:#ffffff;letter-spacing:-0.154px;left:726px;">General</div>
<div class="t" style="top:130px;font-size:17px;line-height:26px;color:#d0d0d0;left:233.5px;width:1000px;text-align:center;">$</div>
<div class="t" style="top:130px;font-size:17px;line-height:26px;color:#d0d0d0;left:275px;width:1000px;text-align:center;">%</div>
<div class="t" style="top:132px;font-size:8.5px;line-height:12px;color:#d0d0d0;left:832.5px;">0</div>
<div class="t" style="top:140px;font-size:8.5px;line-height:12px;color:#d0d0d0;left:825px;">.00</div>
<div class="t" style="top:132px;font-size:8.5px;line-height:12px;color:#d0d0d0;left:851px;">.00</div>
<div class="t" style="top:140px;font-size:8.5px;line-height:12px;color:#d0d0d0;left:856.3px;">.0</div>
<div class="t" style="top:167px;font-size:11.5px;line-height:18px;color:#ffffff;letter-spacing:0.019px;left:287px;width:1000px;text-align:center;text-indent:0.019px;">Number</div>
<div class="t" style="top:127px;font-size:11.5px;line-height:18px;color:#ffffff;letter-spacing:0.445px;left:421px;width:1000px;text-align:center;text-indent:0.445px;">Conditional</div>
<div class="t" style="top:143px;font-size:11.5px;line-height:18px;color:#ffffff;letter-spacing:0.337px;left:415px;width:1000px;text-align:center;text-indent:0.337px;">Formatting</div>
<div class="t" style="top:127px;font-size:11.5px;line-height:18px;color:#ffffff;letter-spacing:0.029px;left:489px;width:1000px;text-align:center;text-indent:0.029px;">Format as</div>
<div class="t" style="top:143px;font-size:11.5px;line-height:18px;color:#ffffff;letter-spacing:0.375px;left:484px;width:1000px;text-align:center;text-indent:0.375px;">Table</div>
<div class="t" style="top:105px;font-size:13.4px;line-height:20px;color:#000;letter-spacing:0.169px;left:1031px;">Normal</div>
<div class="t" style="top:105px;font-size:13.4px;line-height:20px;color:#9c0006;letter-spacing:-0.914px;left:1136px;">Bad</div>
<div class="t" style="top:105px;font-size:13.4px;line-height:20px;color:#006100;letter-spacing:-0.255px;left:1242px;">Good</div>
<div class="t" style="top:133px;font-size:13.4px;line-height:20px;color:#9c5700;letter-spacing:0.471px;left:1030.5px;">Neutral</div>
<div class="t" style="top:133px;font-size:13.4px;line-height:20px;color:#fa7d00;font-weight:700;letter-spacing:-0.317px;left:1136px;">Calculation</div>
<div class="t" style="top:133px;font-size:13.4px;line-height:20px;color:#fff;font-weight:700;letter-spacing:-0.498px;left:1242px;">Check Cell</div>
<div class="t" style="top:167px;font-size:11.5px;line-height:18px;color:#ffffff;letter-spacing:-0.466px;left:621px;width:1000px;text-align:center;text-indent:-0.466px;">Styles</div>
<div class="t" style="top:128px;font-size:11.5px;line-height:18px;color:#ffffff;letter-spacing:0.047px;left:897px;width:1000px;text-align:center;text-indent:0.047px;">Insert</div>
<div class="t" style="top:128px;font-size:11.5px;line-height:18px;color:#ffffff;letter-spacing:-0.05px;left:940.5px;width:1000px;text-align:center;text-indent:-0.05px;">Delete</div>
<div class="t" style="top:127px;font-size:11.5px;line-height:18px;color:#ffffff;letter-spacing:0.316px;left:985px;width:1000px;text-align:center;text-indent:0.316px;">Format</div>
<div class="t" style="top:167px;font-size:11.5px;line-height:18px;color:#ffffff;letter-spacing:-0.391px;left:941px;width:1000px;text-align:center;text-indent:-0.391px;">Cells</div>
<div class="t" style="top:94px;font-size:11.5px;line-height:18px;color:#ffffff;letter-spacing:0.448px;left:1547px;">AutoSum</div>
<div class="t" style="top:119px;font-size:11.5px;line-height:18px;color:#ffffff;letter-spacing:-0.234px;left:1547px;">Fill</div>
<div class="t" style="top:146px;font-size:11.5px;line-height:18px;color:#ffffff;letter-spacing:-0.121px;left:1547px;">Clear</div>
<div class="t" style="top:91px;font-size:15px;line-height:22px;color:#3a96dd;left:1136px;width:1000px;text-align:center;">A</div>
<div class="t" style="top:105px;font-size:15px;line-height:22px;color:#dcdcdc;left:1135.5px;width:1000px;text-align:center;">Z</div>
<div class="t" style="top:127px;font-size:11.5px;line-height:18px;color:#ffffff;letter-spacing:0.406px;left:1144.5px;width:1000px;text-align:center;text-indent:0.406px;">Sort &amp;</div>
<div class="t" style="top:143px;font-size:11.5px;line-height:18px;color:#ffffff;letter-spacing:0.287px;left:1139px;width:1000px;text-align:center;text-indent:0.287px;">Filter</div>
<div class="t" style="top:127px;font-size:11.5px;line-height:18px;color:#ffffff;letter-spacing:0.55px;left:1190.5px;width:1000px;text-align:center;text-indent:0.55px;">Find &amp;</div>
<div class="t" style="top:143px;font-size:11.5px;line-height:18px;color:#ffffff;letter-spacing:0.006px;left:1186px;width:1000px;text-align:center;text-indent:0.006px;">Select</div>
<div class="t" style="top:167px;font-size:11.5px;line-height:18px;color:#ffffff;letter-spacing:0.138px;left:1118px;width:1000px;text-align:center;text-indent:0.138px;">Editing</div>
<div class="t" style="top:127px;font-size:11.5px;line-height:18px;color:#ffffff;letter-spacing:0.013px;left:1253.5px;width:1000px;text-align:center;text-indent:0.013px;">Analyse</div>
<div class="t" style="top:143px;font-size:11.5px;line-height:18px;color:#ffffff;letter-spacing:0.234px;left:1253.5px;width:1000px;text-align:center;text-indent:0.234px;">Data</div>
<div class="t" style="top:167px;font-size:11.5px;line-height:18px;color:#ffffff;letter-spacing:-0.261px;left:1253px;width:1000px;text-align:center;text-indent:-0.261px;">Analysis</div>
<div class="t" style="top:991px;font-size:14px;line-height:22px;color:#f0f0f0;letter-spacing:-0.08px;left:125px;">Question 1</div>
<div class="t" style="top:991px;font-size:14px;line-height:22px;color:#f0f0f0;letter-spacing:-0.163px;left:217px;">Answer Report 1</div>
<div class="t" style="top:991px;font-size:14px;line-height:22px;color:#f0f0f0;letter-spacing:-0.137px;left:346px;">Sensitivity Report 1</div>
<div class="t" style="top:991px;font-size:14px;line-height:22px;color:#f0f0f0;letter-spacing:-0.08px;left:492px;">Question 2</div>
<div class="t" style="top:991px;font-size:14px;line-height:22px;color:#f0f0f0;letter-spacing:-0.163px;left:586px;">Answer Report 2</div>
<div class="t" style="top:989px;font-size:14px;line-height:22px;color:#262626;letter-spacing:0.126px;left:715px;">Sensitivity Report 2</div>
<div class="t" style="top:1020px;font-size:11.5px;line-height:18px;color:#f0f0f0;letter-spacing:-0.562px;left:9.2px;">Ready</div>
<div class="t" style="top:1020px;font-size:11.5px;line-height:18px;color:#f0f0f0;letter-spacing:0.045px;left:77px;">Accessibility: Good to go</div>
<div class="t" style="top:1020px;font-size:11.5px;line-height:18px;color:#f0f0f0;letter-spacing:-0.974px;left:1886.6px;">100%</div>
</div>
</div></body></html>
